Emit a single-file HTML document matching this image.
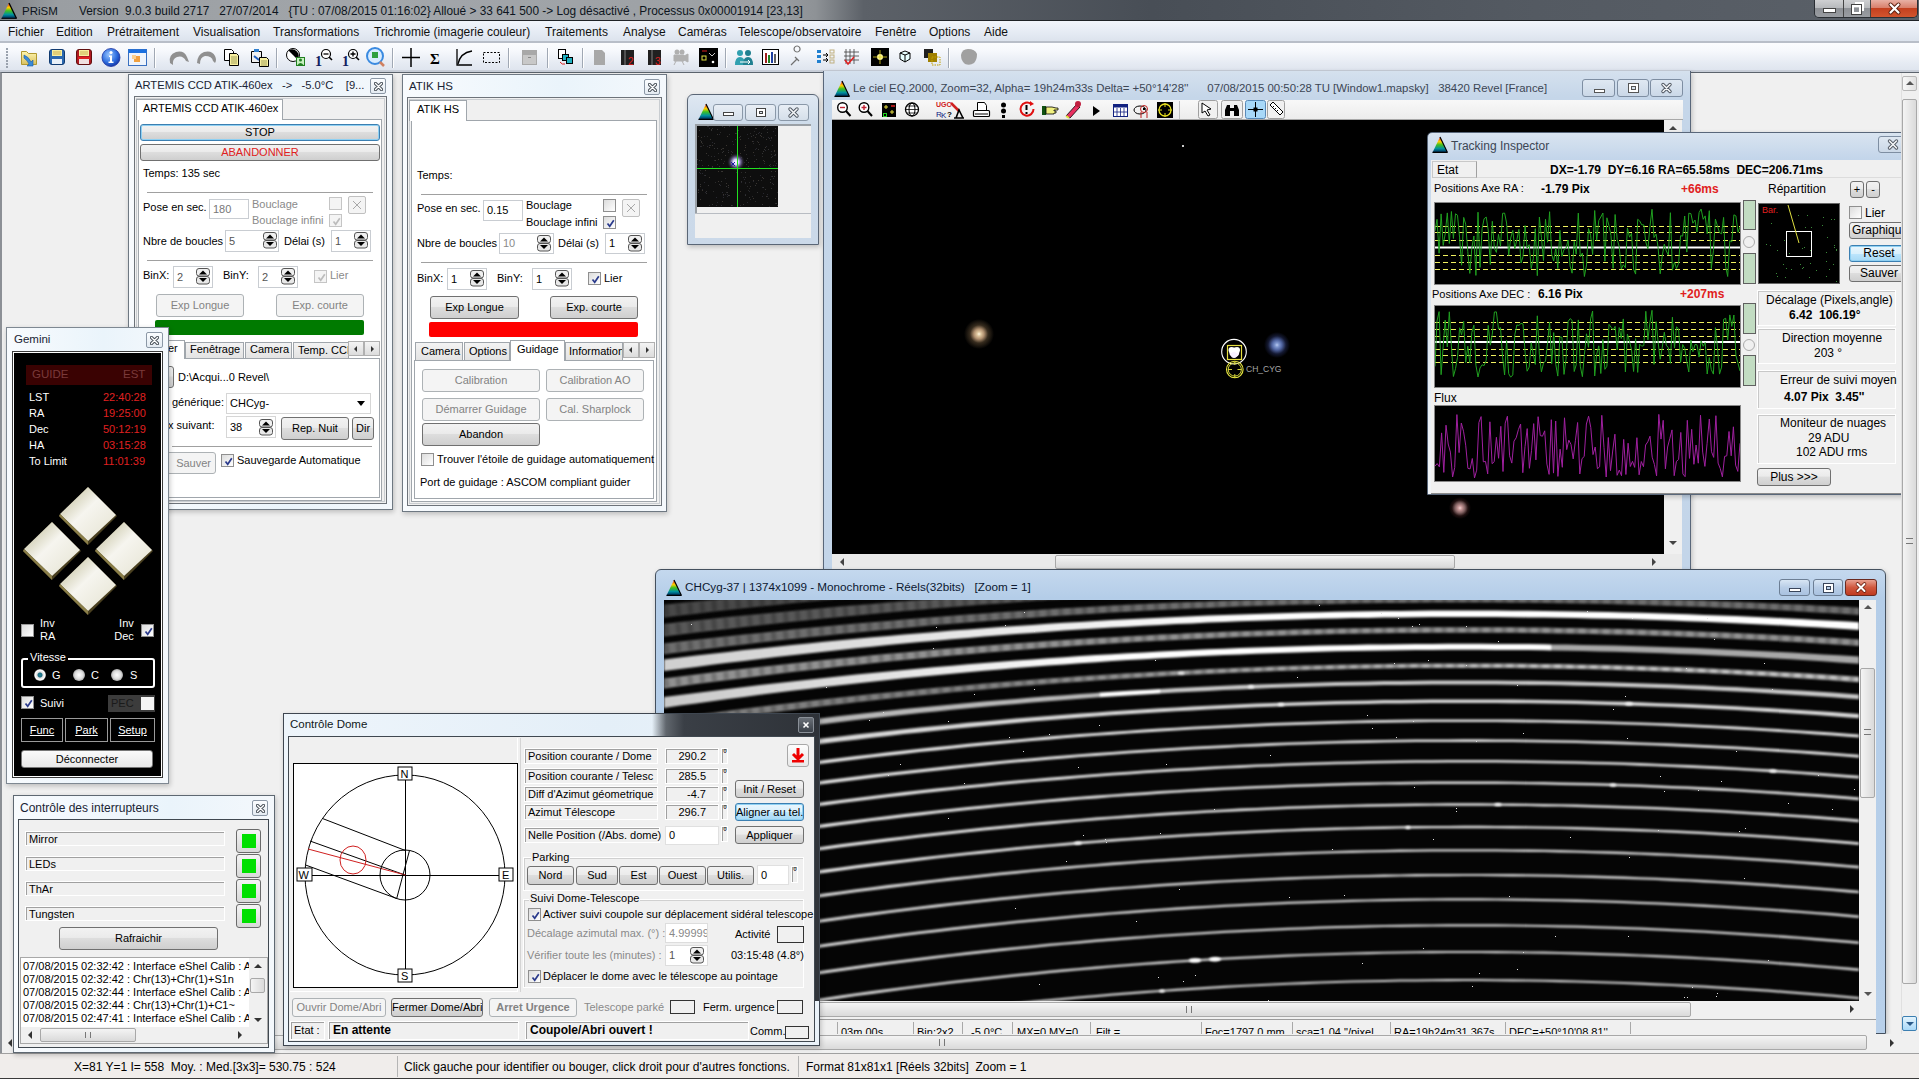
<!DOCTYPE html>
<html><head><meta charset="utf-8">
<style>
*{box-sizing:border-box;margin:0;padding:0}
html,body{width:1919px;height:1079px;overflow:hidden;background:#f0f0f0;font-family:"Liberation Sans",sans-serif;font-size:11px;color:#000}
.a{position:absolute}
.t{position:absolute;white-space:pre;line-height:1}
/* title bar */
#title{left:0;top:0;width:1919px;height:21px;background:linear-gradient(90deg,#7e8286 0,#9a9ea2 3%,#a2a6aa 20%,#9ca0a4 40%,#8e9296 42.5%,#5c6168 45%,#484e56 60%,#545a62 80%,#5a6068 100%);border-bottom:1px solid #1e2226}
#menu{left:0;top:21px;width:1919px;height:21px;background:linear-gradient(#f1f5fb,#e4eaf3 60%,#dbe2ec)}
#menu span{position:absolute;top:4px;font-size:12px;color:#111;white-space:pre}
#tbar{left:0;top:41px;width:1919px;height:31px;background:linear-gradient(#fbfcfe 0,#f6f8fc 8px,#e6ebf3 20px,#dde3ed);border-top:2px solid #b8bec8;box-shadow:inset 0 -2px 0 #c8ced8}
#tbin{left:3px;top:1px;width:1912px;height:27px;background:linear-gradient(#fbfcfe,#eef2f8 50%,#dfe5ee);border:1px solid #b6becb;border-radius:2px}
.sep{position:absolute;top:6px;width:2px;height:20px;border-left:1px solid #a8b0bc;border-right:1px solid #fff}
.ic{position:absolute;width:16px;height:16px;top:7px}
#mdi{left:0;top:72px;width:1919px;height:981px;background:#f0f0f0;border-top:1px solid #5b636c;border-left:2px solid #8c9096}
#status{left:0;top:1053px;width:1919px;height:26px;background:#f0edeb;border-top:1px solid #a0a0a0;border-bottom:1px solid #3a3a3a}
/* windows */
.win{position:absolute;border:1px solid #4e5866;border-radius:5px 5px 0 0;background:linear-gradient(#dbe7f4,#c5d7eb 30px,#c2d5ea);box-shadow:1px 2px 5px rgba(0,0,0,.22)}
.tw{position:absolute;border:1px solid #6e7882;background:linear-gradient(90deg,#f8fbfe,#eaf4fb 60%,#f4f8fc);box-shadow:1px 2px 5px rgba(0,0,0,.22)}
.wt{position:absolute;white-space:pre;font-size:12px;color:#1a2434;line-height:1}
.cbtn{position:absolute;width:15px;height:15px;border:1px solid #8c98a6;border-radius:2px;background:linear-gradient(#fbfdff,#e4ebf2)}

.wbtn{position:absolute;height:18px;border:1px solid #7c8ea3;border-radius:3px;background:linear-gradient(#e6eef8,#c9d8ea 50%,#b9cce3)}
.panel{position:absolute;background:#f0f0f0;border:1px solid #9aa3ad}
.btn{position:absolute;border:1px solid #707070;border-radius:3px;background:linear-gradient(#f2f2f2,#ebebeb 45%,#dddddd 50%,#cfcfcf);text-align:center;font-size:11px;line-height:16px;white-space:pre}
.btnd{position:absolute;border:1px solid #adb2b5;border-radius:3px;background:#f4f4f4;color:#838383;text-align:center;font-size:11px;line-height:16px;white-space:pre}
.edit{position:absolute;background:#fff;border:1px solid #c9cdd2;font-size:11px;line-height:14px;padding-left:3px;white-space:pre}
.chk{position:absolute;width:13px;height:13px;border:1px solid #8f8f8f;background:linear-gradient(135deg,#dcdcdc,#fff)}
.spin{position:absolute;width:13px;height:16px}
.spn{position:absolute;width:14px;height:17px;border:1px solid #6a6a6a;border-radius:3px;background:linear-gradient(#fafafa,#dcdcdc 50%,#fafafa 50%,#dcdcdc)}.spn:before{content:"";position:absolute;left:3px;top:2px;border-left:3px solid transparent;border-right:3px solid transparent;border-bottom:4px solid #000}.spn:after{content:"";position:absolute;left:3px;top:9px;border-left:3px solid transparent;border-right:3px solid transparent;border-top:4px solid #000}
.blk{position:absolute;background:#000}
</style></head><body>
<!-- TITLE BAR -->
<div id="title" class="a">
  <svg class="a" style="left:1px;top:2px" width="16" height="17" viewBox="0 0 16 17"><defs><linearGradient id="pg" x1="0" y1="0" x2="0" y2="1"><stop offset="0" stop-color="#e02020"/><stop offset=".3" stop-color="#ffd000"/><stop offset=".5" stop-color="#40c020"/><stop offset=".75" stop-color="#0090a0"/><stop offset="1" stop-color="#002050"/></linearGradient></defs><path d="M8 1 L15.5 16.5 L0.5 16.5Z" fill="url(#pg)"/><path d="M8 1 L15.5 16.5" stroke="#000" stroke-width="1.3"/><path d="M0.5 16.3 L15.5 16.3" stroke="#000" stroke-width="1"/></svg>
  <span class="t" style="left:22px;top:6px;font-size:11.5px;color:#0d1520">PRiSM</span>
  <span class="t" style="left:79px;top:6px;font-size:11.85px;color:#0d1520">Version  9.0.3 build 2717   27/07/2014   {TU : 07/08/2015 01:16:02} Alloué &gt; 33 641 500 -&gt; Log désactivé , Processus 0x00001914 [23,13]</span>
  <div class="a" style="left:1814px;top:0;width:104px;height:18px;border:1px solid #2a2e33;border-top:none;border-radius:0 0 5px 5px;overflow:hidden">
    <div class="a" style="left:0;top:0;width:29px;height:17px;border-right:1px solid #444;background:linear-gradient(#cfd0d2,#b8babd 45%,#8e9196 50%,#9a9da2)"></div>
    <div class="a" style="left:9px;top:9px;width:11px;height:3px;background:#fff;box-shadow:0 0 0 1px #444"></div>
    <div class="a" style="left:29px;top:0;width:27px;height:17px;border-right:1px solid #444;background:linear-gradient(#cfd0d2,#b8babd 45%,#8e9196 50%,#9a9da2)"></div>
    <div class="a" style="left:37px;top:5px;width:9px;height:9px;border:2px solid #fff;box-shadow:0 0 0 1px #444"></div>
    <div class="a" style="left:40px;top:2px;width:9px;height:9px;border-top:2px solid #fff;border-right:2px solid #fff"></div>
    <div class="a" style="left:56px;top:0;width:48px;height:17px;background:linear-gradient(#e8b0a4,#d9806c 45%,#c4401f 50%,#d2552e)"></div>
    <svg class="a" style="left:56px;top:0" width="48" height="17"><path d="M19.5 4.5l8 8M27.5 4.5l-8 8" stroke="#5a2010" stroke-width="4" stroke-linecap="round"/><path d="M19.5 4.5l8 8M27.5 4.5l-8 8" stroke="#fff" stroke-width="2.2" stroke-linecap="round"/></svg>
  </div>
</div>
<!-- MENU -->
<div id="menu" class="a">
  <span style="left:8px">Fichier</span><span style="left:56px">Edition</span><span style="left:107px">Prétraitement</span><span style="left:193px">Visualisation</span><span style="left:273px">Transformations</span><span style="left:374px">Trichromie (imagerie couleur)</span><span style="left:545px">Traitements</span><span style="left:623px">Analyse</span><span style="left:678px">Caméras</span><span style="left:738px">Telescope/observatoire</span><span style="left:875px">Fenêtre</span><span style="left:929px">Options</span><span style="left:984px">Aide</span>
</div>
<!-- TOOLBAR -->
<div id="tbar" class="a"><svg class="a" style="left:0;top:-1px" width="1000" height="30" viewBox="0 42 1000 30">
<defs>
<linearGradient id="gfold" x1="0" y1="0" x2="0" y2="1"><stop offset="0" stop-color="#fff6b0"/><stop offset="1" stop-color="#d8c060"/></linearGradient>
<radialGradient id="ginfo" cx=".4" cy=".35" r=".7"><stop offset="0" stop-color="#9cc8ff"/><stop offset=".6" stop-color="#3070e0"/><stop offset="1" stop-color="#1030a0"/></radialGradient>
</defs>
<!-- grip -->
<g fill="#9aa2ae"><rect x="6" y="48" width="2" height="2"/><rect x="6" y="51" width="2" height="2"/><rect x="6" y="54" width="2" height="2"/><rect x="6" y="57" width="2" height="2"/><rect x="6" y="60" width="2" height="2"/><rect x="6" y="63" width="2" height="2"/><rect x="6" y="66" width="2" height="2"/></g>
<!-- folder -->
<path d="M21.5 51.5 h5 l2 2 h8 v11 h-15z" fill="url(#gfold)" stroke="#b09830"/>
<path d="M24 55 q5 2 7 7 l2 -2 v6 h-6 l2 -2 q-2 -4 -5 -6z" fill="#3a8ad8" stroke="#1a5aa8" stroke-width=".6"/>
<!-- blue floppy -->
<rect x="49.5" y="49.5" width="15" height="15" rx="2.5" fill="#2a68b0" stroke="#103a70"/>
<rect x="52" y="50" width="10" height="6" fill="#f8f0a0"/><path d="M53 52h8M53 54h8" stroke="#c0a040" stroke-width=".8"/>
<rect x="52" y="59" width="10" height="5" fill="#e8f0f8"/>
<!-- red floppy -->
<rect x="76.5" y="49.5" width="15" height="15" rx="2.5" fill="#b01820" stroke="#601010"/>
<rect x="79" y="50" width="10" height="6" fill="#f8f0a0"/><path d="M80 52h8M80 54h8" stroke="#c0a040" stroke-width=".8"/>
<rect x="79" y="59" width="10" height="5" fill="#f0e0e0"/><rect x="78" y="57" width="12" height="2" fill="#e02020"/>
<!-- info -->
<circle cx="111" cy="57.5" r="9" fill="url(#ginfo)" stroke="#1830a0" stroke-width=".8"/>
<circle cx="111" cy="52.5" r="1.6" fill="#fff"/><path d="M109 55.5h3v6h1.5v1.5h-5v-1.5h1.5v-4.5h-1z" fill="#fff"/>
<!-- window -->
<rect x="128.5" y="49.5" width="18" height="16" fill="#eef4fc" stroke="#3a70c0"/>
<rect x="128.5" y="49.5" width="18" height="3.5" fill="#1a70e0"/>
<rect x="134" y="56" width="6" height="6" fill="#f0a040"/><rect x="132" y="55" width="4" height="4" fill="#f8d090"/>
<path d="M154.5 48v20" stroke="#a0a8b4"/><path d="M155.5 48v20" stroke="#fff"/>
<!-- undo/redo gray -->
<path d="M170 63 q-2 -8 6 -11 q8 -2 11 5 l2 5 l-3 -1 q-3 -6 -9 -4 q-5 2 -4 8z" fill="#909090"/>
<path d="M197 63 q0 -8 7 -11 q8 -2 11 4 q2 4 0 7 l-2 -2 q-1 -5 -8 -5 q-5 1 -5 8z" fill="#909090"/>
<!-- copy -->
<path d="M224.5 49.5h7l2 2v9h-9z" fill="#fff" stroke="#000"/><path d="M229.5 53.5h7l2 2v10h-9z" fill="#f8f0a0" stroke="#000"/><path d="M231 57h6M231 59h6M231 61h6M231 63h6" stroke="#808040" stroke-width=".7"/>
<!-- paste -->
<path d="M251.5 51.5h10v11h-10z" fill="#f0f0f0" stroke="#000"/><rect x="254" y="49" width="5" height="3" fill="#3080d0"/><path d="M254 56l5 4" stroke="#2060c0" stroke-width="2"/><path d="M259.5 57.5h7l2 2v7h-9z" fill="#f8f0a0" stroke="#000"/><path d="M261 61h6M261 63h6M261 65h6" stroke="#808040" stroke-width=".7"/>
<path d="M276.5 48v20" stroke="#a0a8b4"/><path d="M277.5 48v20" stroke="#fff"/>
<!-- black half circle -->
<circle cx="293" cy="55" r="6.5" fill="#fff" stroke="#000"/><path d="M288.5 50.5 a6.5 6.5 0 0 1 9 9z" fill="#000"/>
<rect x="296.5" y="57.5" width="8" height="8" fill="#c8f0c0" stroke="#208020"/><circle cx="300.5" cy="60" r="1.5" fill="#208020"/><path d="M297.5 65 q3 -4 6 0" fill="#208020"/>
<!-- 1 with magnifier minus -->
<text x="315" y="66" font-size="14" font-weight="bold" font-family="Liberation Serif" fill="#102060">1</text>
<circle cx="326" cy="54" r="4.5" fill="#fff" stroke="#000" stroke-width="1.2"/><path d="M323.5 54h5" stroke="#000" stroke-width="1.3"/><path d="M329 57l3 3" stroke="#000" stroke-width="1.6"/>
<text x="342" y="66" font-size="14" font-weight="bold" font-family="Liberation Serif" fill="#102060">1</text>
<circle cx="353" cy="54" r="4.5" fill="#fff" stroke="#000" stroke-width="1.2"/><path d="M350.5 54h5M353 51.5v5" stroke="#000" stroke-width="1.3"/><path d="M356 57l3 3" stroke="#000" stroke-width="1.6"/>
<!-- magnifier blue -->
<circle cx="375" cy="56" r="8" fill="#d8ecff" stroke="#3a8ae0" stroke-width="2"/><rect x="372" y="52" width="6" height="6" fill="#30a040"/><path d="M380 62l4 4" stroke="#d08060" stroke-width="2.5"/>
<path d="M392.5 48v20" stroke="#a0a8b4"/><path d="M393.5 48v20" stroke="#fff"/>
<!-- + -->
<path d="M402 57.5h18M411 48v19" stroke="#000" stroke-width="1.5"/>
<text x="430" y="64" font-size="15" font-family="Liberation Serif" font-weight="bold">Σ</text>
<path d="M457 49v16h15" fill="none" stroke="#000" stroke-width="1.3"/><path d="M458 64 q2 -11 14 -13" fill="none" stroke="#000" stroke-width="1.3"/>
<rect x="483.5" y="52.5" width="16" height="10" fill="none" stroke="#000" stroke-dasharray="2 1.5"/>
<path d="M508.5 48v20" stroke="#a0a8b4"/><path d="M509.5 48v20" stroke="#fff"/>
<!-- gray box -->
<rect x="522" y="50" width="15" height="15" fill="#a8a8a8"/><rect x="523" y="55" width="13" height="9" fill="#c8c8c8"/><rect x="528" y="57" width="3" height="1" fill="#888"/>
<path d="M547.5 48v20" stroke="#a0a8b4"/><path d="M548.5 48v20" stroke="#fff"/>
<!-- blue/red -->
<rect x="558.5" y="49.5" width="7" height="9" fill="#fff" stroke="#000"/><rect x="562.5" y="54.5" width="6" height="6" fill="#20b0c0" stroke="#000"/><rect x="566.5" y="57.5" width="6" height="6" fill="#20b0c0" stroke="#000"/><path d="M560 62 q2 3 5 2" stroke="#e02020" fill="none"/>
<path d="M582.5 48v20" stroke="#a0a8b4"/><path d="M583.5 48v20" stroke="#fff"/>
<!-- books -->
<path d="M594 50h8l3 3v12h-11z" fill="#a8a8a8"/>
<rect x="621" y="50" width="13" height="15" fill="#202020"/><rect x="624" y="50" width="2" height="15" fill="#505050"/><text x="628" y="65" font-size="10" fill="#e02020" font-family="Liberation Sans">2</text>
<rect x="648" y="50" width="13" height="15" fill="#202020"/><rect x="651" y="50" width="2" height="15" fill="#505050"/><text x="655" y="65" font-size="10" fill="#e02020" font-family="Liberation Sans">3</text>
<path d="M674 55h10v6h-10zM684 56l4 -2v8l-4 -2zM676 61l-2 4M682 61l2 4" fill="#b0b0b0" stroke="#b0b0b0"/><circle cx="677" cy="52" r="2.5" fill="#b0b0b0"/><circle cx="682" cy="52" r="2.5" fill="#b0b0b0"/>
<rect x="699" y="48" width="19" height="19" fill="#000"/><rect x="702" y="56" width="4" height="4" fill="none" stroke="#e0e040"/><path d="M702 51h5" stroke="#e02020"/><circle cx="713" cy="62" r="1.3" fill="#fff"/><path d="M709 53 l3 3 l3 -3" stroke="#fff" fill="none" stroke-width=".8"/>
<path d="M725.5 48v20" stroke="#a0a8b4"/><path d="M726.5 48v20" stroke="#fff"/>
<!-- people -->
<circle cx="740" cy="53" r="3" fill="#30a0b0"/><path d="M735 65 q0 -8 5 -8 q5 0 5 8z" fill="#30a0b0"/><circle cx="748" cy="53" r="3" fill="#208090"/><path d="M743 65 q0 -8 5 -8 q5 0 5 8z" fill="#208090"/><path d="M740 62h10l-2 -2M750 62l-2 2" stroke="#fff" fill="none"/>
<rect x="762.5" y="49.5" width="16" height="15" fill="#fff" stroke="#000"/><rect x="765" y="53" width="2" height="10" fill="#a02020"/><rect x="768" y="55" width="2" height="8" fill="#208020"/><rect x="771" y="52" width="2" height="11" fill="#2040a0"/><rect x="774" y="54" width="2" height="9" fill="#606060"/>
<path d="M791 65 l6 -6 M797 52 a3 3 0 1 1 0.1 0 M795 57 l4 4" stroke="#707070" fill="none" stroke-width="1.2"/>
<g fill="#2080d0"><rect x="817" y="50" width="4" height="3"/><rect x="817" y="55" width="4" height="3"/><rect x="817" y="60" width="4" height="3"/></g><path d="M823 55h5M826 53l2 2l-2 2M823 60h5M826 58l2 2l-2 2" stroke="#000" fill="none"/><g fill="none" stroke="#c0b080"><rect x="830" y="50" width="4" height="3"/><rect x="830" y="55" width="4" height="3"/><rect x="830" y="60" width="4" height="3"/></g>
<path d="M846 49v15M850 49v15M854 49v15M844 52h15M844 56h15M844 60h15" stroke="#404040" stroke-width=".8"/><path d="M845 60l3 4l6 -7" stroke="#e02020" stroke-width="1.5" fill="none"/>
<rect x="871" y="48" width="18" height="18" fill="#000"/><circle cx="880" cy="57" r="3" fill="#fff8a0"/><path d="M880 50v14M873 57h14" stroke="#e0d020" stroke-width=".8"/>
<path d="M900 53l5 -2l5 2v6l-5 3l-5 -3z" fill="#e8ffff" stroke="#000"/><path d="M905 55v7M900 53l5 2l5 -2" stroke="#000" fill="none"/>
<rect x="924" y="49" width="9" height="9" fill="#202020"/><rect x="928" y="53" width="9" height="9" fill="#a08000"/><rect x="932" y="57" width="8" height="8" fill="none" stroke="#c0a000" stroke-dasharray="1.5 1"/>
<path d="M948.5 48v20" stroke="#a0a8b4"/><path d="M949.5 48v20" stroke="#fff"/>
<path d="M961 55 q1 -6 7 -6 q7 0 9 5 q0 6 -3 9 q-4 3 -9 1 q-4 -3 -4 -9z" fill="#a0a0a0"/>
</svg>
</div>
<!-- MDI -->
<div id="mdi" class="a"></div>
<!-- STATUS -->
<div id="status" class="a">
  <span class="t" style="left:74px;top:7px;font-size:12px">X=81 Y=1 I= 558  Moy. : Med.[3x3]= 530.75 : 524</span>
  <div class="a" style="left:397px;top:2px;width:1px;height:21px;background:#b5b5b5"></div>
  <span class="t" style="left:404px;top:7px;font-size:12px">Click gauche pour identifier ou bouger, click droit pour d'autres fonctions.</span>
  <div class="a" style="left:798px;top:2px;width:1px;height:21px;background:#b5b5b5"></div>
  <span class="t" style="left:806px;top:7px;font-size:12px">Format 81x81x1 [Réels 32bits]  Zoom = 1</span>
</div>
<!-- ARTEMIS -->
<div class="tw" style="left:128px;top:74px;width:265px;height:436px"></div>
<span class="wt" style="left:135px;top:80px;font-size:11.2px">ARTEMIS CCD ATIK-460ex   -&gt;   -5.0°C    [9...</span>
<div class="cbtn" style="left:370px;top:78px;width:16px;height:16px"><svg class="a" style="left:3px;top:3px" width="9" height="9"><path d="M1.5 1.5l6 6M7.5 1.5l-6 6" stroke="#4a525a" stroke-width="3.2" stroke-linecap="round"/><path d="M1.5 1.5l6 6M7.5 1.5l-6 6" stroke="#fff" stroke-width="1.3" stroke-linecap="round"/></svg></div>
<div class="a" style="left:134px;top:96px;width:253px;height:408px;background:#f0f0f0;border:1px solid #6d737a"></div>
<div class="a" style="left:136px;top:98px;width:249px;height:404px;background:#f0f0f0;border:1px solid #c9cdd1"></div>
<div class="a" style="left:138px;top:119px;width:244px;height:382px;background:#fff;border:1px solid #a0a6ac"></div>
<div class="a" style="left:136px;top:99px;width:147px;height:21px;background:#fff;border:1px solid #a0a6ac;border-bottom:none"></div>
<span class="t" style="left:143px;top:103px;font-size:11px">ARTEMIS CCD ATIK-460ex</span>
<div class="btn" style="left:140px;top:124px;width:240px;height:17px;border:1px solid #3c7fb1;box-shadow:inset 0 0 0 1px #8fd0f2;line-height:15px;font-size:11px">STOP</div>
<div class="btn" style="left:140px;top:144px;width:240px;height:17px;color:#e02020;line-height:15px">ABANDONNER</div>
<span class="t" style="left:143px;top:168px">Temps: 135 sec</span>
<div class="a" style="left:147px;top:192px;width:226px;height:2px;border-top:1px solid #a0a0a0;border-bottom:1px solid #fff"></div>
<span class="t" style="left:143px;top:202px">Pose en sec.</span>
<div class="edit" style="left:209px;top:199px;width:40px;height:20px;color:#777;line-height:18px">180</div>
<span class="t" style="left:252px;top:199px;color:#8a8a8a">Bouclage</span>
<div class="chk" style="left:329px;top:197px;border-color:#c5c5c5;background:#f4f4f4"></div>
<div class="a" style="left:348px;top:196px;width:18px;height:18px;border:1px solid #c0c0c0;border-radius:2px;background:#f4f4f4;color:#aaa;font-size:13px;text-align:center;line-height:16px"><svg class="a" style="left:3px;top:3px" width="10" height="10"><path d="M1 1l8 8M9 1l-8 8" stroke="#a8a8a8" stroke-width="1"/></svg></div>
<span class="t" style="left:252px;top:215px;color:#8a8a8a">Bouclage infini</span>
<div class="chk" style="left:329px;top:214px;border-color:#c5c5c5;background:#f4f4f4;color:#bbb;font-size:11px;line-height:11px;text-align:center"><svg class="a" style="left:1px;top:1px" width="11" height="11"><path d="M2.5 5.5l2.2 2.8L8.8 2.2" fill="none" stroke="#bcbcbc" stroke-width="1.7"/></svg></div>
<span class="t" style="left:143px;top:236px">Nbre de boucles</span>
<div class="edit" style="left:225px;top:230px;width:54px;height:22px;color:#555;line-height:20px">5</div>
<span class="t" style="left:284px;top:236px">Délai (s)</span>
<div class="edit" style="left:331px;top:230px;width:40px;height:22px;color:#555;line-height:20px">1</div>
<div class="a" style="left:147px;top:260px;width:226px;height:2px;border-top:1px solid #a0a0a0;border-bottom:1px solid #fff"></div>
<span class="t" style="left:143px;top:270px">BinX:</span>
<div class="edit" style="left:173px;top:266px;width:40px;height:22px;color:#555;line-height:20px">2</div>
<span class="t" style="left:223px;top:270px">BinY:</span>
<div class="edit" style="left:258px;top:266px;width:40px;height:22px;color:#555;line-height:20px">2</div>
<div class="chk" style="left:314px;top:270px;border-color:#c5c5c5;background:#f4f4f4;color:#bbb;font-size:11px;line-height:11px;text-align:center"><svg class="a" style="left:1px;top:1px" width="11" height="11"><path d="M2.5 5.5l2.2 2.8L8.8 2.2" fill="none" stroke="#bcbcbc" stroke-width="1.7"/></svg></div>
<span class="t" style="left:330px;top:270px;color:#8a8a8a">Lier</span>
<div class="btnd" style="left:156px;top:294px;width:88px;height:23px;line-height:21px;font-size:11px">Exp Longue</div>
<div class="btnd" style="left:276px;top:294px;width:88px;height:23px;line-height:21px;font-size:11px">Exp. courte</div>
<div class="a" style="left:155px;top:320px;width:209px;height:15px;background:#007a00;border-radius:2px"></div>
<!-- tabs row 2 -->
<div class="a" style="left:168px;top:358px;width:212px;height:140px;background:#fff;border:1px solid #a0a6ac"></div>
<div class="a" style="left:165px;top:340px;width:20px;height:19px;background:#fff;border:1px solid #a0a6ac;border-bottom:none"></div>
<span class="t" style="left:168px;top:343px;font-size:11px">er</span>
<div class="a" style="left:185px;top:342px;width:59px;height:17px;background:linear-gradient(#f3f3f3,#e3e3e3);border:1px solid #a0a6ac"></div>
<span class="t" style="left:190px;top:344px;font-size:11px">Fenêtrage</span>
<div class="a" style="left:245px;top:342px;width:47px;height:17px;background:linear-gradient(#f3f3f3,#e3e3e3);border:1px solid #a0a6ac"></div>
<span class="t" style="left:250px;top:344px;font-size:11px">Camera</span>
<div class="a" style="left:293px;top:342px;width:56px;height:17px;background:linear-gradient(#f3f3f3,#e3e3e3);border:1px solid #a0a6ac;overflow:hidden"><span class="t" style="left:4px;top:2px;font-size:11px">Temp. CCD</span></div>
<div class="a" style="left:348px;top:341px;width:16px;height:15px;background:linear-gradient(#f4f4f4,#dcdcdc);border:1px solid #b0b0b0;font-size:8px;line-height:13px;text-align:center;color:#333"><div class="a" style="left:5px;top:4px;border-top:3px solid transparent;border-bottom:3px solid transparent;border-right:3px solid #333"></div></div>
<div class="a" style="left:364px;top:341px;width:16px;height:15px;background:linear-gradient(#f4f4f4,#dcdcdc);border:1px solid #b0b0b0;font-size:8px;line-height:13px;text-align:center;color:#333"><div class="a" style="left:6px;top:4px;border-top:3px solid transparent;border-bottom:3px solid transparent;border-left:3px solid #333"></div></div>
<div class="btn" style="left:160px;top:366px;width:14px;height:22px"></div>
<span class="t" style="left:178px;top:372px">D:\Acqui...0 Revel\</span>
<span class="t" style="left:172px;top:397px">générique:</span>
<div class="edit" style="left:226px;top:393px;width:145px;height:21px;line-height:19px;font-size:11px;border-color:#d6d6d6">CHCyg-</div>
<div class="a" style="left:357px;top:401px;width:0;height:0;border-left:4px solid transparent;border-right:4px solid transparent;border-top:5px solid #000"></div>
<span class="t" style="left:168px;top:420px">x suivant:</span>
<div class="edit" style="left:226px;top:416px;width:50px;height:22px;line-height:20px;font-size:11px;border-color:#d6d6d6">38</div>
<div class="btn" style="left:281px;top:417px;width:68px;height:23px;line-height:21px;font-size:11px">Rep. Nuit</div>
<div class="btn" style="left:352px;top:417px;width:22px;height:23px;line-height:21px;font-size:11px;text-align:left;padding-left:3px;overflow:hidden">Dir</div>
<div class="a" style="left:172px;top:446px;width:200px;height:2px;border-top:1px solid #a0a0a0;border-bottom:1px solid #fff"></div>
<div class="btnd" style="left:162px;top:452px;width:54px;height:22px;line-height:20px;font-size:11px;text-align:right;padding-right:4px">Sauver</div>
<div class="chk" style="left:221px;top:454px;color:#243a8a;font-size:11px;line-height:11px;text-align:center"><svg class="a" style="left:1px;top:1px" width="11" height="11"><path d="M2.5 5.5l2.2 2.8L8.8 2.2" fill="none" stroke="#2a3a8c" stroke-width="1.7"/></svg></div>
<span class="t" style="left:237px;top:455px;font-size:11px">Sauvegarde Automatique</span>

<!-- ATIK HS -->
<div class="tw" style="left:402px;top:74px;width:265px;height:438px"></div>
<span class="wt" style="left:409px;top:81px;font-size:11.5px">ATIK HS</span>
<div class="cbtn" style="left:644px;top:79px;width:16px;height:16px"><svg class="a" style="left:3px;top:3px" width="9" height="9"><path d="M1.5 1.5l6 6M7.5 1.5l-6 6" stroke="#4a525a" stroke-width="3.2" stroke-linecap="round"/><path d="M1.5 1.5l6 6M7.5 1.5l-6 6" stroke="#fff" stroke-width="1.3" stroke-linecap="round"/></svg></div>
<div class="a" style="left:407px;top:97px;width:255px;height:409px;background:#f0f0f0;border:1px solid #6d737a"></div>
<div class="a" style="left:409px;top:99px;width:251px;height:405px;background:#f0f0f0;border:1px solid #c9cdd1"></div>
<div class="a" style="left:411px;top:120px;width:246px;height:382px;background:#fff;border:1px solid #a0a6ac"></div>
<div class="a" style="left:409px;top:100px;width:58px;height:21px;background:#fff;border:1px solid #a0a6ac;border-bottom:none"></div>
<span class="t" style="left:417px;top:104px;font-size:11px">ATIK HS</span>
<span class="t" style="left:417px;top:170px">Temps:</span>
<div class="a" style="left:421px;top:194px;width:226px;height:2px;border-top:1px solid #a0a0a0;border-bottom:1px solid #fff"></div>
<span class="t" style="left:417px;top:203px">Pose en sec.</span>
<div class="edit" style="left:483px;top:200px;width:40px;height:21px;line-height:19px;font-size:11px">0.15</div>
<span class="t" style="left:526px;top:200px">Bouclage</span>
<div class="chk" style="left:603px;top:199px"></div>
<div class="a" style="left:622px;top:199px;width:18px;height:18px;border:1px solid #c0c0c0;border-radius:2px;background:#f4f4f4;color:#aaa;font-size:13px;text-align:center;line-height:16px"><svg class="a" style="left:3px;top:3px" width="10" height="10"><path d="M1 1l8 8M9 1l-8 8" stroke="#a8a8a8" stroke-width="1"/></svg></div>
<span class="t" style="left:526px;top:217px">Bouclage infini</span>
<div class="chk" style="left:603px;top:216px;color:#243a8a;font-size:11px;line-height:11px;text-align:center"><svg class="a" style="left:1px;top:1px" width="11" height="11"><path d="M2.5 5.5l2.2 2.8L8.8 2.2" fill="none" stroke="#2a3a8c" stroke-width="1.7"/></svg></div>
<span class="t" style="left:417px;top:238px">Nbre de boucles</span>
<div class="edit" style="left:499px;top:233px;width:55px;height:21px;line-height:19px;color:#8a8a8a;font-size:11px">10</div>
<span class="t" style="left:558px;top:238px">Délai (s)</span>
<div class="edit" style="left:605px;top:233px;width:40px;height:21px;line-height:19px;font-size:11px">1</div>
<div class="a" style="left:421px;top:262px;width:226px;height:2px;border-top:1px solid #a0a0a0;border-bottom:1px solid #fff"></div>
<span class="t" style="left:417px;top:273px">BinX:</span>
<div class="edit" style="left:447px;top:268px;width:40px;height:22px;line-height:20px;font-size:11px">1</div>
<span class="t" style="left:497px;top:273px">BinY:</span>
<div class="edit" style="left:532px;top:268px;width:40px;height:22px;line-height:20px;font-size:11px">1</div>
<div class="chk" style="left:588px;top:272px;color:#243a8a;font-size:11px;line-height:11px;text-align:center"><svg class="a" style="left:1px;top:1px" width="11" height="11"><path d="M2.5 5.5l2.2 2.8L8.8 2.2" fill="none" stroke="#2a3a8c" stroke-width="1.7"/></svg></div>
<span class="t" style="left:604px;top:273px;font-size:11px">Lier</span>
<div class="btn" style="left:430px;top:296px;width:89px;height:23px;line-height:21px;font-size:11px">Exp Longue</div>
<div class="btn" style="left:550px;top:296px;width:88px;height:23px;line-height:21px;font-size:11px">Exp. courte</div>
<div class="a" style="left:429px;top:322px;width:209px;height:15px;background:#f00;border-radius:2px"></div>
<div class="a" style="left:414px;top:360px;width:240px;height:139px;background:#fff;border:1px solid #a0a6ac"></div>
<div class="a" style="left:415px;top:342px;width:48px;height:19px;background:linear-gradient(#f3f3f3,#e3e3e3);border:1px solid #a0a6ac"></div>
<span class="t" style="left:421px;top:346px;font-size:11px">Camera</span>
<div class="a" style="left:464px;top:342px;width:46px;height:19px;background:linear-gradient(#f3f3f3,#e3e3e3);border:1px solid #a0a6ac"></div>
<span class="t" style="left:469px;top:346px;font-size:11px">Options</span>
<div class="a" style="left:510px;top:340px;width:55px;height:21px;background:#fff;border:1px solid #a0a6ac;border-bottom:none"></div>
<span class="t" style="left:517px;top:344px;font-size:11px">Guidage</span>
<div class="a" style="left:565px;top:342px;width:58px;height:19px;background:linear-gradient(#f3f3f3,#e3e3e3);border:1px solid #a0a6ac;overflow:hidden"><span class="t" style="left:3px;top:3px;font-size:11px">Information</span></div>
<div class="a" style="left:623px;top:342px;width:16px;height:16px;background:linear-gradient(#f4f4f4,#dcdcdc);border:1px solid #b0b0b0;font-size:8px;line-height:14px;text-align:center;color:#333"><div class="a" style="left:5px;top:4px;border-top:3px solid transparent;border-bottom:3px solid transparent;border-right:3px solid #333"></div></div>
<div class="a" style="left:639px;top:342px;width:16px;height:16px;background:linear-gradient(#f4f4f4,#dcdcdc);border:1px solid #b0b0b0;font-size:8px;line-height:14px;text-align:center;color:#333"><div class="a" style="left:6px;top:4px;border-top:3px solid transparent;border-bottom:3px solid transparent;border-left:3px solid #333"></div></div>
<div class="btnd" style="left:422px;top:369px;width:118px;height:23px;line-height:21px;font-size:11px">Calibration</div>
<div class="btnd" style="left:546px;top:369px;width:98px;height:23px;line-height:21px;font-size:11px">Calibration AO</div>
<div class="btnd" style="left:422px;top:398px;width:118px;height:23px;line-height:21px;font-size:11px">Démarrer Guidage</div>
<div class="btnd" style="left:546px;top:398px;width:98px;height:23px;line-height:21px;font-size:11px">Cal. Sharplock</div>
<div class="btn" style="left:422px;top:423px;width:118px;height:23px;line-height:21px;font-size:11px">Abandon</div>
<div class="chk" style="left:421px;top:453px"></div>
<span class="t" style="left:437px;top:454px;font-size:11px">Trouver l'étoile de guidage automatiquement</span>
<span class="t" style="left:420px;top:477px;font-size:11px">Port de guidage : ASCOM compliant guider</span>

<svg class="a" style="left:263px;top:232px" width="14" height="17"><rect x="0.5" y="0.5" width="13" height="7.5" rx="2.5" fill="#f0f0f0" stroke="#555"/><rect x="0.5" y="8.5" width="13" height="7.5" rx="2.5" fill="#e8e8e8" stroke="#555"/><path d="M3 6.5h8L7 2.5z M3 10h8L7 14z" fill="#000"/></svg><svg class="a" style="left:354px;top:232px" width="14" height="17"><rect x="0.5" y="0.5" width="13" height="7.5" rx="2.5" fill="#f0f0f0" stroke="#555"/><rect x="0.5" y="8.5" width="13" height="7.5" rx="2.5" fill="#e8e8e8" stroke="#555"/><path d="M3 6.5h8L7 2.5z M3 10h8L7 14z" fill="#000"/></svg><svg class="a" style="left:196px;top:268px" width="14" height="17"><rect x="0.5" y="0.5" width="13" height="7.5" rx="2.5" fill="#f0f0f0" stroke="#555"/><rect x="0.5" y="8.5" width="13" height="7.5" rx="2.5" fill="#e8e8e8" stroke="#555"/><path d="M3 6.5h8L7 2.5z M3 10h8L7 14z" fill="#000"/></svg><svg class="a" style="left:281px;top:268px" width="14" height="17"><rect x="0.5" y="0.5" width="13" height="7.5" rx="2.5" fill="#f0f0f0" stroke="#555"/><rect x="0.5" y="8.5" width="13" height="7.5" rx="2.5" fill="#e8e8e8" stroke="#555"/><path d="M3 6.5h8L7 2.5z M3 10h8L7 14z" fill="#000"/></svg><svg class="a" style="left:537px;top:235px" width="14" height="17"><rect x="0.5" y="0.5" width="13" height="7.5" rx="2.5" fill="#f0f0f0" stroke="#555"/><rect x="0.5" y="8.5" width="13" height="7.5" rx="2.5" fill="#e8e8e8" stroke="#555"/><path d="M3 6.5h8L7 2.5z M3 10h8L7 14z" fill="#000"/></svg><svg class="a" style="left:628px;top:235px" width="14" height="17"><rect x="0.5" y="0.5" width="13" height="7.5" rx="2.5" fill="#f0f0f0" stroke="#555"/><rect x="0.5" y="8.5" width="13" height="7.5" rx="2.5" fill="#e8e8e8" stroke="#555"/><path d="M3 6.5h8L7 2.5z M3 10h8L7 14z" fill="#000"/></svg><svg class="a" style="left:470px;top:270px" width="14" height="17"><rect x="0.5" y="0.5" width="13" height="7.5" rx="2.5" fill="#f0f0f0" stroke="#555"/><rect x="0.5" y="8.5" width="13" height="7.5" rx="2.5" fill="#e8e8e8" stroke="#555"/><path d="M3 6.5h8L7 2.5z M3 10h8L7 14z" fill="#000"/></svg><svg class="a" style="left:555px;top:270px" width="14" height="17"><rect x="0.5" y="0.5" width="13" height="7.5" rx="2.5" fill="#f0f0f0" stroke="#555"/><rect x="0.5" y="8.5" width="13" height="7.5" rx="2.5" fill="#e8e8e8" stroke="#555"/><path d="M3 6.5h8L7 2.5z M3 10h8L7 14z" fill="#000"/></svg>
<svg class="a" style="left:259px;top:419px" width="14" height="17"><rect x="0.5" y="0.5" width="13" height="7.5" rx="2.5" fill="#f0f0f0" stroke="#555"/><rect x="0.5" y="8.5" width="13" height="7.5" rx="2.5" fill="#e8e8e8" stroke="#555"/><path d="M3 6.5h8L7 2.5z M3 10h8L7 14z" fill="#000"/></svg>
<!-- preview -->
<div class="win" style="left:687px;top:94px;width:132px;height:151px;border-radius:6px 6px 0 0;border-color:#5a6676;background:linear-gradient(#dfe8f2,#cddbea 30px,#cbd9e9)"></div>
<svg class="a" style="left:698px;top:103px" width="16" height="17" viewBox="0 0 16 17"><path d="M8 1 L15.5 16.5 L0.5 16.5Z" fill="url(#pg)"/><path d="M8 1 L15.5 16.5 M0.5 16.3 L15.5 16.3" stroke="#000" stroke-width="1.2"/></svg>
<div class="wbtn" style="left:713px;top:104px;width:30px;height:17px;border-color:#8a98a8;background:linear-gradient(#e8eef5,#d5dfea)"><div class="a" style="left:9px;top:7px;width:11px;height:4px;border:1px solid #444;background:#fff"></div></div>
<div class="wbtn" style="left:745px;top:104px;width:31px;height:17px;border-color:#8a98a8;background:linear-gradient(#e8eef5,#d5dfea)"><div class="a" style="left:10px;top:3px;width:10px;height:9px;border:1px solid #444;box-shadow:inset 0 0 0 2px #fff,inset 0 0 0 3px #444"></div></div>
<div class="wbtn" style="left:778px;top:104px;width:31px;height:17px;border-color:#8a98a8;background:linear-gradient(#e8eef5,#d5dfea);text-align:center;font-size:13px;line-height:15px;color:#555;font-weight:bold"><svg class="a" style="left:0;top:0" width="29" height="15"><path d="M11.0 4.0L18.0 11.0M18.0 4.0L11.0 11.0" stroke="#4e5660" stroke-width="3.4" stroke-linecap="round"/><path d="M11.0 4.0L18.0 11.0M18.0 4.0L11.0 11.0" stroke="#f4f6f8" stroke-width="1.6" stroke-linecap="round"/></svg></div>
<div class="a" style="left:695px;top:124px;width:116px;height:89px;background:#f0f0f0;border-top:2px solid #9aa0a6;border-left:2px solid #9aa0a6"></div>
<svg class="a" style="left:697px;top:126px;background:#0e0e0e" width="81" height="81"><defs><radialGradient id="pst"><stop offset="0" stop-color="#fff"/><stop offset=".3" stop-color="#d8d0ff"/><stop offset=".6" stop-color="#6a6090" stop-opacity=".8"/><stop offset="1" stop-color="#202020" stop-opacity="0"/></radialGradient></defs><rect x="50" y="60" width="1" height="1" fill="#2a2a2a"/><rect x="68" y="63" width="1" height="1" fill="#333"/><rect x="53" y="73" width="1" height="1" fill="#2a2a2a"/><rect x="30" y="70" width="1" height="1" fill="#282830"/><rect x="44" y="46" width="1" height="1" fill="#2a2a2a"/><rect x="59" y="33" width="1" height="1" fill="#333"/><rect x="74" y="62" width="1" height="1" fill="#333"/><rect x="62" y="6" width="1" height="1" fill="#282830"/><rect x="10" y="0" width="1" height="1" fill="#2a2a2a"/><rect x="17" y="17" width="1" height="1" fill="#333"/><rect x="71" y="23" width="1" height="1" fill="#333"/><rect x="44" y="55" width="1" height="1" fill="#333"/><rect x="15" y="78" width="1" height="1" fill="#333"/><rect x="78" y="72" width="1" height="1" fill="#3a3530"/><rect x="2" y="34" width="1" height="1" fill="#333"/><rect x="21" y="27" width="1" height="1" fill="#2a2a2a"/><rect x="48" y="57" width="1" height="1" fill="#2a2a2a"/><rect x="25" y="66" width="1" height="1" fill="#282830"/><rect x="56" y="15" width="1" height="1" fill="#282830"/><rect x="57" y="5" width="1" height="1" fill="#2a2a2a"/><rect x="77" y="29" width="1" height="1" fill="#282830"/><rect x="1" y="64" width="1" height="1" fill="#3a3530"/><rect x="30" y="68" width="1" height="1" fill="#282830"/><rect x="4" y="15" width="1" height="1" fill="#333"/><rect x="10" y="20" width="1" height="1" fill="#282830"/><rect x="28" y="29" width="1" height="1" fill="#3a3530"/><rect x="63" y="9" width="1" height="1" fill="#3a3530"/><rect x="70" y="3" width="1" height="1" fill="#2a2a2a"/><rect x="17" y="42" width="1" height="1" fill="#3a3530"/><rect x="74" y="28" width="1" height="1" fill="#2a2a2a"/><rect x="25" y="26" width="1" height="1" fill="#333"/><rect x="65" y="51" width="1" height="1" fill="#3a3530"/><rect x="81" y="13" width="1" height="1" fill="#2a2a2a"/><rect x="7" y="49" width="1" height="1" fill="#282830"/><rect x="3" y="60" width="1" height="1" fill="#3a3530"/><rect x="67" y="37" width="1" height="1" fill="#282830"/><rect x="12" y="79" width="1" height="1" fill="#2a2a2a"/><rect x="65" y="27" width="1" height="1" fill="#333"/><rect x="11" y="59" width="1" height="1" fill="#333"/><rect x="51" y="64" width="1" height="1" fill="#2a2a2a"/><rect x="14" y="30" width="1" height="1" fill="#2a2a2a"/><rect x="68" y="24" width="1" height="1" fill="#282830"/><rect x="75" y="50" width="1" height="1" fill="#333"/><rect x="79" y="37" width="1" height="1" fill="#282830"/><rect x="56" y="26" width="1" height="1" fill="#3a3530"/><rect x="24" y="33" width="1" height="1" fill="#333"/><rect x="9" y="67" width="1" height="1" fill="#333"/><rect x="51" y="40" width="1" height="1" fill="#3a3530"/><rect x="15" y="40" width="1" height="1" fill="#3a3530"/><rect x="5" y="64" width="1" height="1" fill="#3a3530"/><rect x="56" y="54" width="1" height="1" fill="#3a3530"/><rect x="29" y="57" width="1" height="1" fill="#3a3530"/><rect x="68" y="21" width="1" height="1" fill="#3a3530"/><rect x="78" y="28" width="1" height="1" fill="#333"/><rect x="47" y="1" width="1" height="1" fill="#3a3530"/><rect x="26" y="22" width="1" height="1" fill="#3a3530"/><rect x="66" y="52" width="1" height="1" fill="#3a3530"/><rect x="28" y="52" width="1" height="1" fill="#282830"/><rect x="28" y="68" width="1" height="1" fill="#282830"/><rect x="79" y="77" width="1" height="1" fill="#333"/><rect x="43" y="13" width="1" height="1" fill="#3a3530"/><rect x="76" y="39" width="1" height="1" fill="#2a2a2a"/><rect x="58" y="59" width="1" height="1" fill="#333"/><rect x="50" y="76" width="1" height="1" fill="#282830"/><rect x="25" y="45" width="1" height="1" fill="#3a3530"/><rect x="58" y="2" width="1" height="1" fill="#333"/><rect x="48" y="51" width="1" height="1" fill="#333"/><rect x="18" y="56" width="1" height="1" fill="#2a2a2a"/><rect x="80" y="79" width="1" height="1" fill="#333"/><rect x="4" y="11" width="1" height="1" fill="#3a3530"/><rect x="78" y="39" width="1" height="1" fill="#2a2a2a"/><rect x="34" y="28" width="1" height="1" fill="#2a2a2a"/><rect x="48" y="19" width="1" height="1" fill="#3a3530"/><rect x="0" y="33" width="1" height="1" fill="#3a3530"/><rect x="69" y="70" width="1" height="1" fill="#3a3530"/><rect x="78" y="45" width="1" height="1" fill="#3a3530"/><rect x="8" y="44" width="1" height="1" fill="#3a3530"/><rect x="77" y="24" width="1" height="1" fill="#3a3530"/><rect x="66" y="34" width="1" height="1" fill="#3a3530"/><rect x="38" y="13" width="1" height="1" fill="#282830"/><rect x="46" y="78" width="1" height="1" fill="#333"/><rect x="49" y="28" width="1" height="1" fill="#2a2a2a"/><rect x="31" y="26" width="1" height="1" fill="#333"/><rect x="26" y="71" width="1" height="1" fill="#282830"/><rect x="35" y="79" width="1" height="1" fill="#282830"/><rect x="24" y="79" width="1" height="1" fill="#282830"/><rect x="31" y="69" width="1" height="1" fill="#333"/><rect x="48" y="21" width="1" height="1" fill="#3a3530"/><rect x="40" y="34" width="1" height="1" fill="#3a3530"/><rect x="77" y="25" width="1" height="1" fill="#3a3530"/><rect x="12" y="2" width="1" height="1" fill="#282830"/><rect x="20" y="3" width="1" height="1" fill="#333"/><rect x="67" y="1" width="1" height="1" fill="#3a3530"/><rect x="20" y="38" width="1" height="1" fill="#2a2a2a"/><rect x="20" y="22" width="1" height="1" fill="#333"/><rect x="58" y="23" width="1" height="1" fill="#282830"/><rect x="49" y="38" width="1" height="1" fill="#2a2a2a"/><rect x="1" y="10" width="1" height="1" fill="#3a3530"/><rect x="43" y="27" width="1" height="1" fill="#3a3530"/><rect x="59" y="2" width="1" height="1" fill="#3a3530"/><rect x="29" y="60" width="1" height="1" fill="#333"/><rect x="3" y="20" width="1" height="1" fill="#282830"/><rect x="56" y="9" width="1" height="1" fill="#333"/><rect x="1" y="63" width="1" height="1" fill="#282830"/><rect x="48" y="56" width="1" height="1" fill="#282830"/><rect x="70" y="68" width="1" height="1" fill="#282830"/><rect x="32" y="69" width="1" height="1" fill="#333"/><rect x="73" y="38" width="1" height="1" fill="#2a2a2a"/><rect x="25" y="0" width="1" height="1" fill="#282830"/><rect x="47" y="53" width="1" height="1" fill="#282830"/><rect x="74" y="12" width="1" height="1" fill="#282830"/><rect x="56" y="72" width="1" height="1" fill="#3a3530"/><rect x="44" y="34" width="1" height="1" fill="#2a2a2a"/><rect x="6" y="19" width="1" height="1" fill="#2a2a2a"/><rect x="64" y="54" width="1" height="1" fill="#2a2a2a"/><rect x="27" y="35" width="1" height="1" fill="#2a2a2a"/><rect x="81" y="57" width="1" height="1" fill="#2a2a2a"/><rect x="10" y="10" width="1" height="1" fill="#2a2a2a"/><rect x="58" y="11" width="1" height="1" fill="#3a3530"/><rect x="57" y="35" width="1" height="1" fill="#333"/><rect x="49" y="34" width="1" height="1" fill="#333"/><rect x="5" y="17" width="1" height="1" fill="#2a2a2a"/><rect x="53" y="60" width="1" height="1" fill="#3a3530"/><rect x="5" y="47" width="1" height="1" fill="#282830"/><rect x="71" y="11" width="1" height="1" fill="#282830"/><rect x="7" y="56" width="1" height="1" fill="#282830"/><rect x="40" y="76" width="1" height="1" fill="#3a3530"/><rect x="74" y="11" width="1" height="1" fill="#3a3530"/><rect x="12" y="51" width="1" height="1" fill="#3a3530"/><rect x="74" y="45" width="1" height="1" fill="#333"/><rect x="21" y="45" width="1" height="1" fill="#3a3530"/><rect x="67" y="23" width="1" height="1" fill="#333"/><rect x="65" y="70" width="1" height="1" fill="#282830"/><rect x="60" y="15" width="1" height="1" fill="#2a2a2a"/><rect x="53" y="7" width="1" height="1" fill="#2a2a2a"/><rect x="7" y="10" width="1" height="1" fill="#282830"/><rect x="19" y="71" width="1" height="1" fill="#282830"/><rect x="78" y="9" width="1" height="1" fill="#2a2a2a"/><rect x="44" y="31" width="1" height="1" fill="#333"/><rect x="77" y="35" width="1" height="1" fill="#333"/><rect x="61" y="7" width="1" height="1" fill="#282830"/><rect x="66" y="11" width="1" height="1" fill="#282830"/><rect x="29" y="19" width="1" height="1" fill="#3a3530"/><rect x="75" y="57" width="1" height="1" fill="#282830"/><rect x="31" y="59" width="1" height="1" fill="#3a3530"/><rect x="52" y="65" width="1" height="1" fill="#282830"/><rect x="78" y="29" width="1" height="1" fill="#2a2a2a"/><rect x="48" y="46" width="1" height="1" fill="#333"/><rect x="32" y="8" width="1" height="1" fill="#2a2a2a"/><rect x="15" y="16" width="1" height="1" fill="#282830"/><rect x="72" y="39" width="1" height="1" fill="#3a3530"/><rect x="0" y="38" width="1" height="1" fill="#282830"/><rect x="26" y="37" width="1" height="1" fill="#333"/><rect x="13" y="13" width="1" height="1" fill="#3a3530"/><rect x="70" y="70" width="1" height="1" fill="#282830"/><rect x="12" y="21" width="1" height="1" fill="#3a3530"/><rect x="66" y="61" width="1" height="1" fill="#333"/><rect x="3" y="73" width="1" height="1" fill="#3a3530"/><rect x="75" y="30" width="1" height="1" fill="#2a2a2a"/><rect x="56" y="55" width="1" height="1" fill="#282830"/><rect x="69" y="13" width="1" height="1" fill="#3a3530"/><rect x="24" y="55" width="1" height="1" fill="#333"/><rect x="3" y="58" width="1" height="1" fill="#333"/><rect x="53" y="50" width="1" height="1" fill="#3a3530"/><rect x="55" y="15" width="1" height="1" fill="#3a3530"/><rect x="23" y="59" width="1" height="1" fill="#282830"/><rect x="13" y="19" width="1" height="1" fill="#333"/><rect x="76" y="52" width="1" height="1" fill="#282830"/><rect x="59" y="22" width="1" height="1" fill="#282830"/><rect x="5" y="63" width="1" height="1" fill="#282830"/><rect x="14" y="3" width="1" height="1" fill="#3a3530"/><rect x="76" y="58" width="1" height="1" fill="#333"/><rect x="73" y="40" width="1" height="1" fill="#282830"/><rect x="4" y="20" width="1" height="1" fill="#2a2a2a"/><rect x="40" y="63" width="1" height="1" fill="#2a2a2a"/><rect x="21" y="33" width="1" height="1" fill="#3a3530"/><rect x="52" y="71" width="1" height="1" fill="#333"/><rect x="15" y="41" width="1" height="1" fill="#282830"/><rect x="15" y="19" width="1" height="1" fill="#3a3530"/><rect x="64" y="7" width="1" height="1" fill="#333"/><rect x="48" y="69" width="1" height="1" fill="#333"/><rect x="51" y="36" width="1" height="1" fill="#3a3530"/><rect x="39" y="46" width="1" height="1" fill="#282830"/><rect x="42" y="11" width="1" height="1" fill="#2a2a2a"/><rect x="74" y="25" width="1" height="1" fill="#282830"/><rect x="72" y="81" width="1" height="1" fill="#2a2a2a"/><rect x="11" y="39" width="1" height="1" fill="#3a3530"/><rect x="66" y="25" width="1" height="1" fill="#333"/><rect x="43" y="38" width="1" height="1" fill="#2a2a2a"/><rect x="65" y="78" width="1" height="1" fill="#333"/><rect x="22" y="40" width="1" height="1" fill="#333"/><rect x="4" y="16" width="1" height="1" fill="#3a3530"/><rect x="71" y="72" width="1" height="1" fill="#2a2a2a"/><rect x="34" y="25" width="1" height="1" fill="#2a2a2a"/><rect x="73" y="53" width="1" height="1" fill="#333"/><rect x="47" y="36" width="1" height="1" fill="#2a2a2a"/><rect x="59" y="57" width="1" height="1" fill="#3a3530"/><rect x="9" y="65" width="1" height="1" fill="#333"/><rect x="26" y="25" width="1" height="1" fill="#333"/><rect x="21" y="55" width="1" height="1" fill="#3a3530"/><rect x="3" y="44" width="1" height="1" fill="#2a2a2a"/><rect x="2" y="4" width="1" height="1" fill="#333"/><rect x="67" y="35" width="1" height="1" fill="#3a3530"/><rect x="77" y="50" width="1" height="1" fill="#333"/><rect x="43" y="10" width="1" height="1" fill="#333"/><rect x="27" y="1" width="1" height="1" fill="#333"/><rect x="59" y="8" width="1" height="1" fill="#333"/><rect x="51" y="12" width="1" height="1" fill="#282830"/><rect x="64" y="10" width="1" height="1" fill="#3a3530"/><rect x="36" y="18" width="1" height="1" fill="#282830"/><rect x="14" y="4" width="1" height="1" fill="#333"/><rect x="43" y="79" width="1" height="1" fill="#2a2a2a"/><rect x="8" y="66" width="1" height="1" fill="#282830"/><rect x="56" y="17" width="1" height="1" fill="#2a2a2a"/><rect x="3" y="47" width="1" height="1" fill="#282830"/><rect x="57" y="29" width="1" height="1" fill="#282830"/><rect x="17" y="22" width="1" height="1" fill="#333"/><rect x="25" y="42" width="1" height="1" fill="#333"/><rect x="30" y="66" width="1" height="1" fill="#2a2a2a"/><rect x="50" y="32" width="1" height="1" fill="#333"/><rect x="12" y="19" width="1" height="1" fill="#282830"/><rect x="3" y="14" width="1" height="1" fill="#2a2a2a"/><rect x="61" y="23" width="1" height="1" fill="#333"/><rect x="65" y="61" width="1" height="1" fill="#282830"/><rect x="55" y="70" width="1" height="1" fill="#2a2a2a"/><rect x="65" y="30" width="1" height="1" fill="#2a2a2a"/><rect x="8" y="49" width="1" height="1" fill="#333"/><rect x="66" y="2" width="1" height="1" fill="#2a2a2a"/><rect x="49" y="42" width="1" height="1" fill="#282830"/><rect x="44" y="56" width="1" height="1" fill="#282830"/><rect x="80" y="66" width="1" height="1" fill="#2a2a2a"/><rect x="43" y="65" width="1" height="1" fill="#3a3530"/><rect x="78" y="2" width="1" height="1" fill="#333"/><rect x="23" y="6" width="1" height="1" fill="#2a2a2a"/><rect x="63" y="49" width="1" height="1" fill="#282830"/><rect x="25" y="75" width="1" height="1" fill="#3a3530"/><rect x="75" y="19" width="1" height="1" fill="#2a2a2a"/><rect x="61" y="54" width="1" height="1" fill="#3a3530"/><rect x="73" y="56" width="1" height="1" fill="#333"/><rect x="39" y="7" width="1" height="1" fill="#2a2a2a"/><rect x="19" y="79" width="1" height="1" fill="#282830"/><rect x="32" y="0" width="1" height="1" fill="#282830"/><rect x="31" y="61" width="1" height="1" fill="#333"/><rect x="74" y="50" width="1" height="1" fill="#282830"/><rect x="26" y="68" width="1" height="1" fill="#3a3530"/><rect x="20" y="8" width="1" height="1" fill="#3a3530"/><rect x="25" y="22" width="1" height="1" fill="#2a2a2a"/><rect x="73" y="14" width="1" height="1" fill="#282830"/><rect x="62" y="18" width="1" height="1" fill="#2a2a2a"/><rect x="46" y="51" width="1" height="1" fill="#282830"/><rect x="34" y="34" width="1" height="1" fill="#333"/><rect x="24" y="23" width="1" height="1" fill="#3a3530"/><rect x="15" y="2" width="1" height="1" fill="#2a2a2a"/><rect x="24" y="45" width="1" height="1" fill="#333"/><rect x="35" y="26" width="1" height="1" fill="#2a2a2a"/><rect x="52" y="56" width="1" height="1" fill="#2a2a2a"/><rect x="5" y="39" width="1" height="1" fill="#2a2a2a"/><rect x="26" y="69" width="1" height="1" fill="#282830"/><rect x="75" y="19" width="1" height="1" fill="#282830"/><rect x="68" y="0" width="1" height="1" fill="#333"/><rect x="9" y="27" width="1" height="1" fill="#3a3530"/><rect x="50" y="8" width="1" height="1" fill="#282830"/><rect x="60" y="66" width="1" height="1" fill="#333"/><rect x="58" y="75" width="1" height="1" fill="#2a2a2a"/><rect x="30" y="66" width="1" height="1" fill="#333"/><rect x="17" y="30" width="1" height="1" fill="#282830"/><rect x="72" y="80" width="1" height="1" fill="#2a2a2a"/><rect x="20" y="76" width="1" height="1" fill="#282830"/><rect x="30" y="10" width="1" height="1" fill="#3a3530"/><rect x="11" y="0" width="1" height="1" fill="#282830"/><rect x="78" y="77" width="1" height="1" fill="#2a2a2a"/><rect x="40" y="76" width="1" height="1" fill="#3a3530"/><rect x="1" y="66" width="1" height="1" fill="#3a3530"/><rect x="61" y="16" width="1" height="1" fill="#3a3530"/><rect x="31" y="24" width="1" height="1" fill="#282830"/><rect x="52" y="62" width="1" height="1" fill="#2a2a2a"/><rect x="47" y="24" width="1" height="1" fill="#3a3530"/><rect x="76" y="5" width="1" height="1" fill="#282830"/><rect x="4" y="34" width="1" height="1" fill="#333"/><rect x="22" y="58" width="1" height="1" fill="#333"/><rect x="22" y="8" width="1" height="1" fill="#282830"/><rect x="35" y="15" width="1" height="1" fill="#282830"/><rect x="69" y="20" width="1" height="1" fill="#282830"/><rect x="29" y="66" width="1" height="1" fill="#2a2a2a"/><rect x="66" y="11" width="1" height="1" fill="#2a2a2a"/><rect x="2" y="46" width="1" height="1" fill="#282830"/><rect x="70" y="6" width="1" height="1" fill="#333"/><rect x="16" y="65" width="1" height="1" fill="#2a2a2a"/><rect x="38" y="7" width="1" height="1" fill="#3a3530"/><rect x="48" y="68" width="1" height="1" fill="#282830"/><rect x="41" y="4" width="1" height="1" fill="#282830"/><rect x="62" y="41" width="1" height="1" fill="#2a2a2a"/><rect x="17" y="34" width="1" height="1" fill="#282830"/><rect x="66" y="67" width="1" height="1" fill="#282830"/><rect x="74" y="31" width="1" height="1" fill="#333"/><rect x="72" y="12" width="1" height="1" fill="#333"/><rect x="34" y="79" width="1" height="1" fill="#3a3530"/><rect x="18" y="34" width="1" height="1" fill="#3a3530"/><rect x="11" y="29" width="1" height="1" fill="#2a2a2a"/><rect x="54" y="10" width="1" height="1" fill="#333"/><circle cx="39" cy="36" r="9" fill="url(#pst)"/><path d="M34 40l4 -4M34 36l4 4" stroke="#2020a0" stroke-width="1"/></svg>
<div class="a" style="left:737px;top:126px;width:1px;height:81px;background:#20e020"></div>
<div class="a" style="left:697px;top:168px;width:81px;height:1px;background:#20e020"></div>
<div class="a" style="left:695px;top:213px;width:116px;height:25px;background:#f0f0f0;border-top:1px solid #b8bcc2"></div>

<!-- SKY -->
<div class="win" style="left:823px;top:71px;width:868px;height:513px;border-top:none;border-radius:0;border-color:#59677a;background:linear-gradient(#d5e1ee,#c5d6e9 26px,#c3d5e9)"></div>
<svg class="a" style="left:834px;top:80px" width="16" height="17" viewBox="0 0 16 17"><path d="M8 1 L15.5 16.5 L0.5 16.5Z" fill="url(#pg)"/><path d="M8 1 L15.5 16.5 M0.5 16.3 L15.5 16.3" stroke="#000" stroke-width="1.2"/></svg>
<span class="wt" style="left:853px;top:83px;color:#3c4654;font-size:11.4px">Le ciel EQ.2000, Zoom=32, Alpha= 19h24m33s Delta= +50°14'28''      07/08/2015 00:50:28 TU [Window1.mapsky]   38420 Revel [France]</span>
<div class="wbtn" style="left:1582px;top:79px;width:33px;height:18px;border-color:#7e8ea2;background:linear-gradient(#dfe8f2,#cbd8e7)"><div class="a" style="left:11px;top:9px;width:11px;height:4px;border:1px solid #555;background:#fff"></div></div>
<div class="wbtn" style="left:1617px;top:79px;width:32px;height:18px;border-color:#7e8ea2;background:linear-gradient(#dfe8f2,#cbd8e7)"><div class="a" style="left:10px;top:3px;width:11px;height:10px;border:1px solid #555;box-shadow:inset 0 0 0 2px #fff,inset 0 0 0 3px #555"></div></div>
<div class="wbtn" style="left:1650px;top:79px;width:33px;height:18px;border-color:#7e8ea2;background:linear-gradient(#dfe8f2,#cbd8e7);text-align:center;font-size:13px;line-height:16px;color:#555;font-weight:bold"><svg class="a" style="left:0;top:0" width="31" height="16"><path d="M12.0 4.5L19.0 11.5M19.0 4.5L12.0 11.5" stroke="#4e5660" stroke-width="3.4" stroke-linecap="round"/><path d="M12.0 4.5L19.0 11.5M19.0 4.5L12.0 11.5" stroke="#f4f6f8" stroke-width="1.6" stroke-linecap="round"/></svg></div>
<div class="a" style="left:832px;top:100px;width:851px;height:20px;background:linear-gradient(#f8f8f8,#ececec);border-bottom:1px solid #a8a8a8"></div>
<div class="blk" style="left:832px;top:120px;width:832px;height:434px"></div>
<div class="a" style="left:1664px;top:120px;width:18px;height:434px;background:#f0f0f0"></div>
<div class="a" style="left:1669px;top:541px;border-left:4px solid transparent;border-right:4px solid transparent;border-top:4px solid #444"></div><div class="a" style="left:1669px;top:126px;border-left:4px solid transparent;border-right:4px solid transparent;border-bottom:4px solid #444"></div>
<div class="a" style="left:832px;top:554px;width:850px;height:16px;background:#eaeaea"></div>
<div class="a" style="left:840px;top:558px;border-top:4px solid transparent;border-bottom:4px solid transparent;border-right:4px solid #444"></div>
<div class="a" style="left:1055px;top:555px;width:400px;height:14px;border:1px solid #a8a8a8;border-radius:2px;background:linear-gradient(#f4f4f4,#d8d8d8)"></div>
<div class="a" style="left:1652px;top:558px;border-top:4px solid transparent;border-bottom:4px solid transparent;border-left:4px solid #444"></div>
<div class="a" style="left:963px;top:318px;width:32px;height:32px;border-radius:50%;background:radial-gradient(circle,#fff6e0 0,#e0c8a0 2px,#b09070 5px,rgba(100,80,55,.55) 9px,rgba(0,0,0,0) 15px)"></div>
<div class="a" style="left:1263px;top:331px;width:28px;height:28px;border-radius:50%;background:radial-gradient(circle,#b8c8f0 0,#8098d0 2px,#5064a0 5px,rgba(40,50,100,.5) 9px,rgba(0,0,0,0) 13px)"></div>
<div class="a" style="left:1448px;top:496px;width:24px;height:24px;border-radius:50%;background:radial-gradient(circle,#f0d0d0 0,#c89898 2px,#806060 5px,rgba(80,40,40,.4) 8px,rgba(0,0,0,0) 11px)"></div>
<svg class="a" style="left:1210px;top:330px" width="50" height="55" viewBox="1210 330 50 55">
<circle cx="1234" cy="351.7" r="12.3" fill="none" stroke="#fff" stroke-width="1.1"/>
<rect x="1227.5" y="345.5" width="14" height="14" fill="#000" stroke="#e8e040" stroke-width="1.2"/>
<circle cx="1234.3" cy="352.5" r="5" fill="#fff4ff"/><circle cx="1231.5" cy="350" r="3" fill="#fff"/><circle cx="1237" cy="350" r="3" fill="#fff"/><circle cx="1234" cy="355" r="3" fill="#f8f0ff"/>
<circle cx="1234.8" cy="369.5" r="8.3" fill="none" stroke="#e8e840" stroke-width="1.1"/>
<circle cx="1234.8" cy="369.5" r="6.6" fill="none" stroke="#e8e840" stroke-width=".9"/>
<path d="M1228 369.5h4M1237.5 369.5h4M1234.8 374v4M1234.8 362v3" stroke="#e8e840" stroke-width=".9"/>
</svg>
<span class="t" style="left:1246px;top:365px;font-size:8.5px;color:#a8a8a8">CH_CYG</span>
<div class="a" style="left:1182px;top:145px;width:2px;height:2px;background:#ccc"></div>

<svg class="a" style="left:832px;top:100px" width="460" height="20" viewBox="832 100 460 20">
<circle cx="842.5" cy="107.5" r="4.8" fill="#fff" stroke="#000" stroke-width="1.4"/><path d="M840 107.5h5" stroke="#c02030" stroke-width="1.4"/><path d="M846 111l4.5 5" stroke="#000" stroke-width="2"/>
<circle cx="864" cy="107.5" r="4.8" fill="#fff" stroke="#000" stroke-width="1.4"/><path d="M861.5 107.5h5M864 105v5" stroke="#c02030" stroke-width="1.4"/><path d="M867.5 111l4.5 5" stroke="#000" stroke-width="2"/>
<rect x="882" y="103" width="14" height="14" fill="#000"/><path d="M884 107h4M886 105v4M890 112h4M892 110v4" stroke="#e8e040" stroke-width="1"/><rect x="883.5" y="113.5" width="3" height="3" fill="none" stroke="#20d020"/><path d="M891 106h4" stroke="#e02020" stroke-width="1.5"/>
<circle cx="912" cy="109.5" r="6.5" fill="#fff" stroke="#000" stroke-width="1.3"/><ellipse cx="912" cy="109.5" rx="3" ry="6.5" fill="none" stroke="#000"/><path d="M905.5 109.5h13M906.5 106h11M906.5 113h11" stroke="#000" stroke-width=".8"/>
<text x="936" y="107" font-size="7" font-weight="bold" fill="#d02020" font-family="Liberation Sans">UGC</text><text x="936" y="117" font-size="8" fill="#102080" font-family="Liberation Sans">R</text><text x="941" y="118" font-size="8" fill="#102080" font-family="Liberation Sans">K</text><text x="947" y="117" font-size="8" font-weight="bold" fill="#000" font-family="Liberation Sans">?</text>
<path d="M951 103l8 8" stroke="#d02020" stroke-width="2.5"/><path d="M956 118l3 -8l4 8M954 118h10" stroke="#000" stroke-width="1.6" fill="none"/>
<path d="M977.5 102.5h7l2 3v5h-9z" fill="#fff" stroke="#000"/><rect x="973.5" y="110.5" width="16" height="6" rx="1" fill="#fff" stroke="#000" stroke-width="1.2"/><path d="M975 114h13" stroke="#000"/>
<circle cx="1003.5" cy="105" r="2.5" fill="#000"/><circle cx="1003.5" cy="111" r="2.5" fill="#000"/><rect x="1002" y="115" width="3" height="3" fill="#000"/>
<path d="M1031 104 a6.5 6.5 0 1 0 2.5 5" fill="none" stroke="#e01010" stroke-width="2"/><path d="M1030 101l4 3l-4 2z" fill="#e01010"/><path d="M1026.5 105v5" stroke="#000" stroke-width="2"/><rect x="1025.5" y="112" width="2" height="2" fill="#000"/>
<rect x="1042" y="106" width="4" height="9" fill="#105010"/><path d="M1046 107h6l4 1h2v2h-4v1h2v2h-2v1h-8z" fill="#f0f080" stroke="#000" stroke-width=".8"/>
<path d="M1066 116l10 -11l4 2l-10 11z" fill="#e83060" stroke="#000" stroke-width=".8"/><path d="M1066 116l3 2" stroke="#e0e040" stroke-width="2"/><circle cx="1078" cy="104" r="3" fill="#c02040"/>
<path d="M1093 106v10l7 -5z" fill="#000"/>
<rect x="1113.5" y="104.5" width="14" height="12" fill="#fff" stroke="#102080"/><rect x="1113.5" y="104.5" width="14" height="3" fill="#102080"/><path d="M1117 108v8M1120.5 108v8M1124 108v8M1114 112h13" stroke="#102080" stroke-width=".8"/>
<ellipse cx="1140" cy="110" rx="6" ry="4" fill="none" stroke="#000"/><circle cx="1144" cy="109" r="3.5" fill="none" stroke="#c02020"/><rect x="1143" y="108" width="2" height="2" fill="#000"/><path d="M1141 112v6M1147 112v6" stroke="#c02020"/>
<rect x="1157" y="102" width="16" height="16" fill="#000"/><circle cx="1165" cy="110" r="6" fill="none" stroke="#e8e020" stroke-width="1.3"/><path d="M1165 103v4M1165 113v4M1158 110h4M1168 110h4" stroke="#e8e020"/>
<path d="M1179.5 101v18" stroke="#c0c0c0"/>
<rect x="1198.5" y="100.5" width="19" height="18" rx="2" fill="#f0f0f0" stroke="#a0a0a0"/><path d="M1202 103l0 10l3 -2l3 5l2 -1l-3 -5l4 -1z" fill="#fff" stroke="#000"/>
<rect x="1221.5" y="100.5" width="21" height="18" rx="2" fill="#f0f0f0" stroke="#a0a0a0"/><path d="M1225 116v-6l2 -5h3v11zM1239 116v-6l-2 -5h-3v11z" fill="#000"/><rect x="1229" y="108" width="6" height="3" fill="#000"/>
<rect x="1245.5" y="100.5" width="20" height="18" rx="2" fill="#a8d8f8" stroke="#5a8ab8"/><path d="M1255.5 102v15M1248 109.5h15" stroke="#000"/><rect x="1253.5" y="107.5" width="4" height="4" fill="#000"/>
<rect x="1267.5" y="100.5" width="17" height="18" rx="2" fill="#f0f0f0" stroke="#a0a0a0"/><path d="M1270 105l10 10l3 -3l-10 -10z" fill="#fff" stroke="#000"/><path d="M1274 106l-1.5 1.5M1276 108l-1.5 1.5M1278 110l-1.5 1.5" stroke="#000"/>
</svg>

<!-- TI -->
<div class="win" style="left:1427px;top:132px;width:480px;height:363px;border-color:#59677a;border-radius:5px 0 0 0;background:linear-gradient(#d9e4f0,#c3d5ea 26px,#d8e4f0 120px,#f2f5f8 100%)"></div>
<svg class="a" style="left:1432px;top:136px" width="16" height="17" viewBox="0 0 16 17"><path d="M8 1 L15.5 16.5 L0.5 16.5Z" fill="url(#pg)"/><path d="M8 1 L15.5 16.5 M0.5 16.3 L15.5 16.3" stroke="#000" stroke-width="1.2"/></svg>
<span class="wt" style="left:1451px;top:140px;font-size:12px;color:#3c4654">Tracking Inspector</span>
<div class="wbtn" style="left:1878px;top:136px;width:30px;height:17px;border-color:#7e8ea2;background:linear-gradient(#dfe8f2,#cbd8e7);font-size:13px;line-height:15px;color:#555;font-weight:bold;padding-left:9px"><svg class="a" style="left:0;top:0" width="28" height="15"><path d="M10.5 4.0L17.5 11.0M17.5 4.0L10.5 11.0" stroke="#4e5660" stroke-width="3.4" stroke-linecap="round"/><path d="M10.5 4.0L17.5 11.0M17.5 4.0L10.5 11.0" stroke="#f4f6f8" stroke-width="1.6" stroke-linecap="round"/></svg></div>
<div class="a" style="left:1431px;top:160px;width:470px;height:334px;background:#f0f0f0;border-bottom:1px solid #8a8a8a"></div>
<div class="a" style="left:1432px;top:161px;width:45px;height:17px;border:1px solid #c8c8c8;border-right-color:#a0a0a0;background:#f0f0f0"></div>
<div class="a" style="left:1477px;top:161px;width:424px;height:17px;border-bottom:1px solid #dcdcdc"></div>
<span class="t" style="left:1437px;top:164px;font-size:12px">Etat</span>
<span class="t" style="left:1550px;top:164px;font-size:12px;font-weight:bold">DX=-1.79  DY=6.16 RA=65.58ms  DEC=206.71ms</span>
<span class="t" style="left:1434px;top:183px">Positions Axe RA :</span>
<span class="t" style="left:1541px;top:183px;font-size:12px;font-weight:bold">-1.79 Pix</span>
<span class="t" style="left:1681px;top:183px;font-size:12px;font-weight:bold;color:#e02020">+66ms</span>
<span class="t" style="left:1768px;top:183px;font-size:12px">Répartition</span>
<div class="btn" style="left:1850px;top:181px;width:14px;height:17px;font-size:11px;line-height:15px">+</div>
<div class="btn" style="left:1866px;top:181px;width:14px;height:17px;font-size:11px;line-height:15px">-</div>
<svg class="a" style="left:1434px;top:202px;background:#000;border:1px solid #888" width="307" height="83" viewBox="0 0 305 81"><line x1="0" y1="23" x2="305" y2="23" stroke="#f0f060" stroke-width="1" stroke-dasharray="5 3" shape-rendering="crispEdges"/><line x1="0" y1="29.5" x2="305" y2="29.5" stroke="#f0f060" stroke-width="1" stroke-dasharray="5 3" shape-rendering="crispEdges"/><line x1="0" y1="37" x2="305" y2="37" stroke="#f0f060" stroke-width="1" stroke-dasharray="5 3" shape-rendering="crispEdges"/><line x1="0" y1="52" x2="305" y2="52" stroke="#f0f060" stroke-width="1" stroke-dasharray="5 3" shape-rendering="crispEdges"/><line x1="0" y1="59" x2="305" y2="59" stroke="#f0f060" stroke-width="1" stroke-dasharray="5 3" shape-rendering="crispEdges"/><line x1="0" y1="66" x2="305" y2="66" stroke="#f0f060" stroke-width="1" stroke-dasharray="5 3" shape-rendering="crispEdges"/><line x1="0" y1="44.5" x2="305" y2="44.5" stroke="#fff" stroke-width="2.2"/><polyline points="0.0,28.0 2.0,16.3 4.1,50.3 6.1,10.9 8.2,42.4 10.2,30.9 12.3,9.9 14.3,40.5 16.4,8.5 18.4,35.5 20.5,10.8 22.5,12.2 24.6,34.9 26.6,62.2 28.7,14.4 30.7,21.2 32.8,48.7 34.8,70.4 36.8,45.2 38.9,33.0 40.9,72.4 43.0,9.2 45.0,64.4 47.1,25.7 49.1,15.8 51.2,14.0 53.2,27.0 55.3,61.5 57.3,18.3 59.4,45.5 61.4,49.4 63.5,31.3 65.5,43.2 67.6,10.3 69.6,10.1 71.6,20.0 73.7,52.3 75.7,35.1 77.8,27.4 79.8,45.8 81.9,36.8 83.9,26.4 86.0,60.0 88.0,53.5 90.1,22.6 92.1,45.1 94.2,41.7 96.2,65.5 98.3,55.6 100.3,25.6 102.3,72.7 104.4,14.0 106.4,34.4 108.5,57.5 110.5,16.3 112.6,39.2 114.6,8.7 116.7,51.4 118.7,58.0 120.8,45.0 122.8,65.5 124.9,27.3 126.9,53.3 129.0,46.4 131.0,45.4 133.1,37.0 135.1,63.1 137.1,70.2 139.2,38.2 141.2,51.2 143.3,10.1 145.3,53.7 147.4,50.0 149.4,73.5 151.5,61.9 153.5,25.4 155.6,32.2 157.6,51.5 159.7,7.5 161.7,37.4 163.8,17.4 165.8,14.0 167.9,10.0 169.9,58.2 171.9,14.8 174.0,22.8 176.0,32.6 178.1,65.3 180.1,11.5 182.2,36.5 184.2,43.4 186.3,66.1 188.3,61.7 190.4,64.8 192.4,24.9 194.5,34.2 196.5,30.4 198.6,66.1 200.6,71.1 202.7,16.3 204.7,18.0 206.7,21.8 208.8,21.9 210.8,39.0 212.9,46.1 214.9,23.9 217.0,6.3 219.0,34.5 221.1,31.1 223.1,44.5 225.2,70.8 227.2,53.0 229.3,41.1 231.3,48.0 233.4,52.0 235.4,9.7 237.4,67.2 239.5,59.0 241.5,65.5 243.6,60.3 245.6,32.7 247.7,33.1 249.7,13.0 251.8,49.1 253.8,10.2 255.9,10.6 257.9,20.2 260.0,17.0 262.0,29.1 264.1,9.6 266.1,6.0 268.2,16.3 270.2,12.9 272.2,30.7 274.3,7.7 276.3,65.5 278.4,47.8 280.4,16.1 282.5,23.2 284.5,29.6 286.6,30.8 288.6,14.4 290.7,63.7 292.7,73.5 294.8,37.7 296.8,38.9 298.9,11.8 300.9,12.9 303.0,29.3 305.0,24.0" fill="none" stroke="#20a020" stroke-width="1"/></svg>
<div class="a" style="left:1743px;top:200px;width:13px;height:30px;background:#c2dcc2;border:1px solid #606060"></div>
<div class="a" style="left:1743px;top:253px;width:13px;height:31px;background:#c2dcc2;border:1px solid #606060"></div>
<div class="a" style="left:1743px;top:236px;width:12px;height:12px;border-radius:50%;border:1px solid #aaa"></div>
<div class="blk" style="left:1758px;top:203px;width:82px;height:81px;border:1px solid #666"></div>
<span class="t" style="left:1762px;top:206px;font-size:9px;color:#e02020">Bar.</span>
<div class="a" style="left:1786px;top:231px;width:26px;height:26px;border:1px solid #fff"></div>
<svg class="a" style="left:1758px;top:203px" width="82" height="81"><rect x="73" y="16" width="1" height="1" fill="#3a8a3a"/><rect x="75" y="61" width="1" height="1" fill="#3a8a3a"/><rect x="12" y="42" width="1" height="1" fill="#3a8a3a"/><rect x="51" y="74" width="1" height="1" fill="#3a8a3a"/><rect x="31" y="50" width="1" height="1" fill="#3a8a3a"/><rect x="71" y="66" width="1" height="1" fill="#3a8a3a"/><rect x="76" y="42" width="1" height="1" fill="#3a8a3a"/><rect x="53" y="24" width="1" height="1" fill="#3a8a3a"/><rect x="58" y="67" width="1" height="1" fill="#3a8a3a"/><rect x="52" y="60" width="1" height="1" fill="#3a8a3a"/><rect x="19" y="73" width="1" height="1" fill="#3a8a3a"/><rect x="78" y="78" width="1" height="1" fill="#3a8a3a"/><rect x="44" y="65" width="1" height="1" fill="#3a8a3a"/><rect x="27" y="74" width="1" height="1" fill="#3a8a3a"/><rect x="69" y="34" width="1" height="1" fill="#3a8a3a"/><rect x="8" y="41" width="1" height="1" fill="#3a8a3a"/><rect x="45" y="64" width="1" height="1" fill="#3a8a3a"/><rect x="40" y="12" width="1" height="1" fill="#3a8a3a"/><rect x="65" y="14" width="1" height="1" fill="#3a8a3a"/><rect x="64" y="22" width="1" height="1" fill="#3a8a3a"/><rect x="28" y="65" width="1" height="1" fill="#3a8a3a"/><rect x="13" y="20" width="1" height="1" fill="#3a8a3a"/><rect x="42" y="61" width="1" height="1" fill="#3a8a3a"/><rect x="68" y="58" width="1" height="1" fill="#3a8a3a"/><rect x="76" y="44" width="1" height="1" fill="#3a8a3a"/><rect x="76" y="16" width="1" height="1" fill="#3a8a3a"/><rect x="19" y="47" width="1" height="1" fill="#3a8a3a"/><rect x="25" y="61" width="1" height="1" fill="#3a8a3a"/><rect x="52" y="47" width="1" height="1" fill="#3a8a3a"/><rect x="68" y="49" width="1" height="1" fill="#3a8a3a"/><rect x="26" y="37" width="1" height="1" fill="#3a8a3a"/><rect x="68" y="73" width="1" height="1" fill="#3a8a3a"/><rect x="18" y="70" width="1" height="1" fill="#3a8a3a"/><rect x="78" y="47" width="1" height="1" fill="#3a8a3a"/><rect x="47" y="24" width="1" height="1" fill="#3a8a3a"/><rect x="44" y="45" width="1" height="1" fill="#3a8a3a"/><rect x="49" y="12" width="1" height="1" fill="#3a8a3a"/><rect x="78" y="46" width="1" height="1" fill="#3a8a3a"/><rect x="33" y="66" width="1" height="1" fill="#3a8a3a"/><rect x="46" y="44" width="1" height="1" fill="#3a8a3a"/><line x1="30" y1="2" x2="41" y2="40" stroke="#e0e040"/></svg>
<div class="chk" style="left:1849px;top:206px"></div>
<span class="t" style="left:1865px;top:207px;font-size:12px">Lier</span>
<div class="btn" style="left:1849px;top:222px;width:60px;height:17px;font-size:12px;line-height:15px;text-align:left;padding-left:2px">Graphique</div>
<div class="btn" style="left:1849px;top:245px;width:60px;height:17px;font-size:12px;line-height:15px;border-color:#3c7fb1;box-shadow:inset 0 0 0 1px #8fd0f2;background:linear-gradient(#eaf6fd,#d9f0fc 50%,#bee6fd 50%,#a7d9f5)">Reset</div>
<div class="btn" style="left:1849px;top:265px;width:60px;height:17px;font-size:12px;line-height:15px">Sauver</div>
<span class="t" style="left:1432px;top:289px;font-size:11px">Positions Axe DEC :</span>
<span class="t" style="left:1538px;top:288px;font-size:12px;font-weight:bold">6.16 Pix</span>
<span class="t" style="left:1680px;top:288px;font-size:12px;font-weight:bold;color:#e02020">+207ms</span>
<svg class="a" style="left:1434px;top:305px;background:#000;border:1px solid #888" width="307" height="83" viewBox="0 0 305 81"><line x1="0" y1="16.5" x2="305" y2="16.5" stroke="#f0f060" stroke-width="1" stroke-dasharray="5 3" shape-rendering="crispEdges"/><line x1="0" y1="23" x2="305" y2="23" stroke="#f0f060" stroke-width="1" stroke-dasharray="5 3" shape-rendering="crispEdges"/><line x1="0" y1="30" x2="305" y2="30" stroke="#f0f060" stroke-width="1" stroke-dasharray="5 3" shape-rendering="crispEdges"/><line x1="0" y1="43" x2="305" y2="43" stroke="#f0f060" stroke-width="1" stroke-dasharray="5 3" shape-rendering="crispEdges"/><line x1="0" y1="49.5" x2="305" y2="49.5" stroke="#f0f060" stroke-width="1" stroke-dasharray="5 3" shape-rendering="crispEdges"/><line x1="0" y1="56.5" x2="305" y2="56.5" stroke="#f0f060" stroke-width="1" stroke-dasharray="5 3" shape-rendering="crispEdges"/><line x1="0" y1="36" x2="305" y2="36" stroke="#fff" stroke-width="2.2"/><polyline points="0.0,60.4 2.0,15.0 4.1,5.6 6.1,68.7 8.2,39.9 10.2,14.0 12.3,40.9 14.3,5.8 16.4,39.9 18.4,70.5 20.5,62.7 22.5,51.3 24.6,21.8 26.6,28.9 28.7,15.4 30.7,56.5 32.8,40.2 34.8,57.0 36.8,26.4 38.9,19.2 40.9,59.2 43.0,71.0 45.0,62.0 47.1,58.8 49.1,59.6 51.2,54.3 53.2,19.4 55.3,39.2 57.3,28.2 59.4,6.0 61.4,5.9 63.5,23.0 65.5,21.6 67.6,51.1 69.6,69.0 71.6,34.4 73.7,67.7 75.7,71.2 77.8,68.9 79.8,28.8 81.9,19.0 83.9,19.4 86.0,17.4 88.0,17.9 90.1,46.4 92.1,65.2 94.2,61.1 96.2,36.6 98.3,48.4 100.3,58.4 102.3,9.8 104.4,48.9 106.4,65.9 108.5,57.2 110.5,55.0 112.6,36.5 114.6,16.1 116.7,57.7 118.7,26.6 120.8,58.5 122.8,70.1 124.9,30.9 126.9,31.3 129.0,68.4 131.0,53.3 133.1,15.6 135.1,12.6 137.1,14.3 139.2,65.5 141.2,58.8 143.3,13.9 145.3,60.2 147.4,70.7 149.4,48.7 151.5,27.8 153.5,41.3 155.6,12.9 157.6,5.0 159.7,70.0 161.7,48.2 163.8,39.8 165.8,67.5 167.9,33.5 169.9,63.3 171.9,60.2 174.0,18.4 176.0,21.1 178.1,23.9 180.1,20.4 182.2,43.9 184.2,21.6 186.3,32.5 188.3,12.9 190.4,65.9 192.4,28.1 194.5,35.2 196.5,43.7 198.6,65.5 200.6,32.6 202.7,66.4 204.7,38.1 206.7,40.2 208.8,39.6 210.8,5.3 212.9,33.9 214.9,16.5 217.0,4.3 219.0,58.3 221.1,15.7 223.1,36.2 225.2,53.3 227.2,41.8 229.3,26.2 231.3,39.2 233.4,41.8 235.4,57.3 237.4,11.2 239.5,42.1 241.5,20.9 243.6,22.8 245.6,56.5 247.7,38.5 249.7,42.2 251.8,55.7 253.8,66.0 255.9,34.1 257.9,45.7 260.0,38.4 262.0,38.8 264.1,51.1 266.1,34.8 268.2,40.3 270.2,36.5 272.2,68.0 274.3,51.5 276.3,63.6 278.4,68.1 280.4,21.7 282.5,42.0 284.5,68.1 286.6,61.1 288.6,13.3 290.7,12.3 292.7,34.1 294.8,8.9 296.8,20.4 298.9,9.0 300.9,49.5 303.0,57.3 305.0,65.0" fill="none" stroke="#20a020" stroke-width="1"/></svg>
<div class="a" style="left:1743px;top:303px;width:13px;height:31px;background:#c2dcc2;border:1px solid #606060"></div>
<div class="a" style="left:1743px;top:355px;width:13px;height:31px;background:#c2dcc2;border:1px solid #606060"></div>
<div class="a" style="left:1743px;top:339px;width:12px;height:12px;border-radius:50%;border:1px solid #aaa"></div>
<span class="t" style="left:1434px;top:392px;font-size:12px">Flux</span>
<svg class="a" style="left:1434px;top:405px;background:#000;border:1px solid #888" width="307" height="77" viewBox="0 0 305 75"><polyline points="0.0,60.1 2.2,57.6 4.4,60.9 6.6,26.9 8.8,66.4 11.0,19.2 13.2,38.0 15.4,46.1 17.6,71.0 19.7,61.6 21.9,8.6 24.1,46.6 26.3,17.0 28.5,25.2 30.7,39.2 32.9,62.3 35.1,62.9 37.3,52.5 39.5,71.9 41.7,64.1 43.9,16.5 46.1,10.6 48.3,55.8 50.5,55.4 52.7,67.9 54.9,15.8 57.1,57.7 59.2,55.7 61.4,31.3 63.6,52.3 65.8,20.3 68.0,65.5 70.2,17.1 72.4,10.2 74.6,49.8 76.8,57.1 79.0,35.1 81.2,31.8 83.4,23.6 85.6,18.0 87.8,66.7 90.0,40.7 92.2,22.6 94.4,62.3 96.5,44.6 98.7,17.6 100.9,53.9 103.1,10.7 105.3,29.6 107.5,30.2 109.7,24.8 111.9,58.1 114.1,68.4 116.3,13.7 118.5,67.1 120.7,15.0 122.9,70.4 125.1,43.2 127.3,61.3 129.5,11.8 131.7,43.6 133.8,34.1 136.0,38.5 138.2,52.9 140.4,34.7 142.6,16.5 144.8,68.0 147.0,52.6 149.2,50.5 151.4,18.0 153.6,10.2 155.8,21.6 158.0,48.6 160.2,41.0 162.4,62.7 164.6,60.8 166.8,9.3 169.0,41.7 171.2,71.0 173.3,31.5 175.5,64.7 177.7,45.0 179.9,28.2 182.1,69.3 184.3,64.0 186.5,69.7 188.7,33.4 190.9,68.5 193.1,37.2 195.3,60.5 197.5,55.3 199.7,61.4 201.9,31.7 204.1,68.8 206.3,55.5 208.5,60.7 210.6,39.0 212.8,35.8 215.0,30.2 217.2,51.2 219.4,58.4 221.6,69.9 223.8,8.4 226.0,33.1 228.2,14.3 230.4,62.8 232.6,41.0 234.8,32.6 237.0,23.9 239.2,69.7 241.4,55.4 243.6,53.5 245.8,26.4 247.9,67.9 250.1,70.7 252.3,14.3 254.5,52.4 256.7,23.3 258.9,58.3 261.1,39.0 263.3,57.2 265.5,9.2 267.7,46.1 269.9,60.4 272.1,37.3 274.3,13.0 276.5,45.7 278.7,51.4 280.9,9.7 283.1,57.1 285.3,62.7 287.4,70.9 289.6,50.4 291.8,49.8 294.0,25.5 296.2,49.8 298.4,20.8 300.6,59.1 302.8,65.4 305.0,37.3" fill="none" stroke="#a020a0" stroke-width="1"/></svg>
<div class="a" style="left:1757px;top:290px;width:139px;height:36px;border:1px solid #fff;box-shadow:inset 1px 1px 0 #c8c8c8"></div>
<span class="t" style="left:1766px;top:294px;font-size:12px">Décalage (Pixels,angle)</span>
<span class="t" style="left:1789px;top:309px;font-size:12px;font-weight:bold">6.42  106.19°</span>
<div class="a" style="left:1757px;top:328px;width:139px;height:36px;border:1px solid #fff;box-shadow:inset 1px 1px 0 #c8c8c8"></div>
<span class="t" style="left:1782px;top:332px;font-size:12px">Direction moyenne</span>
<span class="t" style="left:1814px;top:347px;font-size:12px">203 °</span>
<div class="a" style="left:1757px;top:370px;width:139px;height:39px;border:1px solid #fff;box-shadow:inset 1px 1px 0 #c8c8c8"></div>
<span class="t" style="left:1780px;top:374px;font-size:12px">Erreur de suivi moyen</span>
<span class="t" style="left:1784px;top:391px;font-size:12px;font-weight:bold">4.07 Pix  3.45''</span>
<div class="a" style="left:1757px;top:414px;width:139px;height:50px;border:1px solid #fff;box-shadow:inset 1px 1px 0 #c8c8c8"></div>
<span class="t" style="left:1780px;top:417px;font-size:12px">Moniteur de nuages</span>
<span class="t" style="left:1808px;top:432px;font-size:12px">29 ADU</span>
<span class="t" style="left:1796px;top:446px;font-size:12px">102 ADU rms</span>
<div class="btn" style="left:1757px;top:468px;width:74px;height:18px;font-size:12px;line-height:16px">Plus &gt;&gt;&gt;</div>

<!-- CHCYG -->
<div class="win" style="left:655px;top:569px;width:1231px;height:465px;border-color:#44505e;border-radius:6px 6px 0 0;background:linear-gradient(#c4d8ee,#b4cde8 28px,#b8d0ea)"></div>
<svg class="a" style="left:666px;top:579px" width="16" height="17" viewBox="0 0 16 17"><path d="M8 1 L15.5 16.5 L0.5 16.5Z" fill="url(#pg)"/><path d="M8 1 L15.5 16.5 M0.5 16.3 L15.5 16.3" stroke="#000" stroke-width="1.2"/></svg>
<span class="wt" style="left:685px;top:581px;font-size:11.7px;color:#0c1830">CHCyg-37 | 1374x1099 - Monochrome - Réels(32bits)   [Zoom = 1]</span>
<div class="wbtn" style="left:1779px;top:579px;width:31px;height:17px;border-color:#6c7e94;background:linear-gradient(#d8e6f4,#b8cde6 50%,#a9c2e0)"><div class="a" style="left:9px;top:8px;width:12px;height:4px;border:1px solid #39455a;background:#fff"></div></div>
<div class="wbtn" style="left:1813px;top:579px;width:30px;height:17px;border-color:#6c7e94;background:linear-gradient(#d8e6f4,#b8cde6 50%,#a9c2e0)"><div class="a" style="left:9px;top:3px;width:11px;height:10px;border:1px solid #39455a;box-shadow:inset 0 0 0 2px #fff,inset 0 0 0 3px #39455a"></div></div>
<div class="wbtn" style="left:1845px;top:579px;width:32px;height:17px;border-color:#6a2a20;background:linear-gradient(#e8a090,#d0583e 50%,#c03a20);text-align:center;font-size:13px;line-height:15px;color:#fff;font-weight:bold"><svg class="a" style="left:0;top:0" width="30" height="15"><path d="M11.5 4.0L18.5 11.0M18.5 4.0L11.5 11.0" stroke="#6a2010" stroke-width="3.6" stroke-linecap="round"/><path d="M11.5 4.0L18.5 11.0M18.5 4.0L11.5 11.0" stroke="#ffffff" stroke-width="2.0" stroke-linecap="round"/></svg></div>
<svg class="a" style="left:664px;top:600px;background:#050505" width="1195" height="401" viewBox="0 0 1195 401">
<defs><filter id="bl" x="-2%" y="-20%" width="104%" height="140%"><feGaussianBlur stdDeviation="1.0"/></filter><filter id="bl2" x="-2%" y="-20%" width="104%" height="140%"><feGaussianBlur stdDeviation="1.8"/></filter><linearGradient id="grad0" gradientUnits="userSpaceOnUse" x1="0" x2="600" y1="0" y2="0"><stop offset="0" stop-color="#cfcfcf"/><stop offset="1" stop-color="#ffffff"/></linearGradient><linearGradient id="grad2" gradientUnits="userSpaceOnUse" x1="0" x2="450" y1="0" y2="0"><stop offset="0" stop-color="#c8c8c8"/><stop offset="1" stop-color="#ffffff"/></linearGradient><linearGradient id="grad3" gradientUnits="userSpaceOnUse" x1="300" x2="900" y1="0" y2="0"><stop offset="0" stop-color="#808080"/><stop offset="1" stop-color="#c0c0c0"/></linearGradient></defs>
<g filter="url(#bl)">
<polygon points="0,4.8 16,3.1 32,1.5 48,-0.1 64,-1.7 80,-3.2 96,-4.7 112,-6.2 128,-7.6 144,-9.0 160,-10.4 176,-11.7 192,-13.0 208,-14.3 224,-15.5 240,-16.7 256,-17.9 272,-19.0 288,-20.1 304,-21.2 320,-22.2 336,-23.2 352,-24.2 368,-25.1 384,-26.0 400,-26.9 416,-27.7 432,-28.5 448,-29.3 464,-30.0 480,-30.7 496,-31.3 512,-32.0 528,-32.6 544,-33.1 560,-33.7 576,-34.1 592,-34.6 608,-35.0 624,-35.4 640,-35.8 656,-36.1 672,-36.4 688,-36.6 704,-36.9 720,-37.1 736,-37.2 752,-37.3 768,-37.4 784,-37.5 800,-37.5 816,-37.5 832,-37.4 848,-37.4 864,-37.2 880,-37.1 896,-36.9 912,-36.7 928,-36.5 944,-36.2 960,-35.9 976,-35.5 992,-35.1 1008,-34.7 1024,-34.3 1040,-33.8 1056,-33.3 1072,-32.7 1088,-32.1 1104,-31.5 1120,-30.9 1136,-30.2 1152,-29.4 1168,-28.7 1184,-27.9 1195,-27.3 1195,-19.0 1184,-19.6 1168,-20.5 1152,-21.4 1136,-22.2 1120,-23.0 1104,-23.7 1088,-24.4 1072,-25.1 1056,-25.7 1040,-26.3 1024,-26.8 1008,-27.3 992,-27.8 976,-28.2 960,-28.6 944,-29.0 928,-29.3 912,-29.6 896,-29.8 880,-30.0 864,-30.2 848,-30.3 832,-30.4 816,-30.5 800,-30.5 784,-30.5 768,-30.4 752,-30.3 736,-30.2 720,-30.0 704,-29.8 688,-29.5 672,-29.2 656,-28.9 640,-28.5 624,-28.1 608,-27.7 592,-27.2 576,-26.7 560,-26.1 544,-25.5 528,-24.9 512,-24.2 496,-23.5 480,-22.8 464,-22.0 448,-21.2 432,-20.3 416,-19.4 400,-18.5 384,-17.5 368,-16.5 352,-15.4 336,-14.3 320,-13.2 304,-12.0 288,-10.8 272,-9.6 256,-8.3 240,-7.0 224,-5.6 208,-4.2 192,-2.8 176,-1.3 160,0.2 144,1.7 128,3.3 112,5.0 96,6.6 80,8.3 64,10.1 48,11.8 32,13.7 16,15.5 0,17.4" fill="#4a4a4a"/>
<polygon points="0,23.9 16,22.1 32,20.4 48,18.7 64,17.1 80,15.5 96,13.9 112,12.4 128,10.9 144,9.4 160,7.9 176,6.5 192,5.2 208,3.9 224,2.6 240,1.3 256,0.1 272,-1.1 288,-2.3 304,-3.4 320,-4.5 336,-5.5 352,-6.5 368,-7.5 384,-8.4 400,-9.3 416,-10.2 432,-11.1 448,-11.9 464,-12.6 480,-13.3 496,-14.0 512,-14.7 528,-15.3 544,-15.9 560,-16.5 576,-17.0 592,-17.5 608,-17.9 624,-18.3 640,-18.7 656,-19.0 672,-19.3 688,-19.6 704,-19.8 720,-20.0 736,-20.2 752,-20.3 768,-20.4 784,-20.5 800,-20.5 816,-20.5 832,-20.4 848,-20.4 864,-20.2 880,-20.1 896,-19.9 912,-19.7 928,-19.4 944,-19.1 960,-18.8 976,-18.4 992,-18.0 1008,-17.6 1024,-17.1 1040,-16.6 1056,-16.0 1072,-15.5 1088,-14.9 1104,-14.2 1120,-13.5 1136,-12.8 1152,-12.0 1168,-11.3 1184,-10.4 1195,-9.8 1195,-1.5 1184,-2.2 1168,-3.1 1152,-4.0 1136,-4.8 1120,-5.6 1104,-6.4 1088,-7.1 1072,-7.8 1056,-8.5 1040,-9.1 1024,-9.7 1008,-10.2 992,-10.7 976,-11.1 960,-11.6 944,-11.9 928,-12.3 912,-12.6 896,-12.8 880,-13.0 864,-13.2 848,-13.3 832,-13.4 816,-13.5 800,-13.5 784,-13.5 768,-13.4 752,-13.3 736,-13.2 720,-13.0 704,-12.8 688,-12.5 672,-12.2 656,-11.8 640,-11.5 624,-11.0 608,-10.6 592,-10.1 576,-9.5 560,-8.9 544,-8.3 528,-7.7 512,-7.0 496,-6.2 480,-5.4 464,-4.6 448,-3.8 432,-2.9 416,-1.9 400,-0.9 384,0.1 368,1.1 352,2.2 336,3.4 320,4.6 304,5.8 288,7.0 272,8.3 256,9.7 240,11.1 224,12.5 208,13.9 192,15.4 176,17.0 160,18.6 144,20.2 128,21.8 112,23.5 96,25.3 80,27.0 64,28.9 48,30.7 32,32.6 16,34.5 0,36.5" fill="#585858"/>
<polygon points="0,43.4 16,41.6 32,39.8 48,38.0 64,36.2 80,34.5 96,32.9 112,31.2 128,29.6 144,28.1 160,26.6 176,25.1 192,23.6 208,22.2 224,20.9 240,19.5 256,18.2 272,17.0 288,15.8 304,14.6 320,13.4 336,12.3 352,11.3 368,10.2 384,9.2 400,8.3 416,7.4 432,6.5 448,5.6 464,4.8 480,4.1 496,3.3 512,2.6 528,2.0 544,1.4 560,0.8 576,0.2 592,-0.3 608,-0.8 624,-1.2 640,-1.6 656,-1.9 672,-2.3 688,-2.6 704,-2.8 720,-3.0 736,-3.2 752,-3.3 768,-3.4 784,-3.5 800,-3.5 816,-3.5 832,-3.4 848,-3.3 864,-3.2 880,-3.1 896,-2.9 912,-2.6 928,-2.3 944,-2.0 960,-1.7 976,-1.3 992,-0.9 1008,-0.4 1024,0.1 1040,0.6 1056,1.2 1072,1.8 1088,2.5 1104,3.2 1120,3.9 1136,4.6 1152,5.4 1168,6.3 1184,7.1 1195,7.8 1195,14.9 1184,14.2 1168,13.3 1152,12.4 1136,11.5 1120,10.6 1104,9.8 1088,9.1 1072,8.4 1056,7.7 1040,7.1 1024,6.5 1008,5.9 992,5.4 976,4.9 960,4.5 944,4.1 928,3.8 912,3.5 896,3.2 880,3.0 864,2.8 848,2.7 832,2.6 816,2.5 800,2.5 784,2.5 768,2.6 752,2.7 736,2.9 720,3.0 704,3.3 688,3.5 672,3.9 656,4.2 640,4.6 624,5.0 608,5.5 592,6.0 576,6.6 560,7.2 544,7.9 528,8.5 512,9.3 496,10.0 480,10.8 464,11.7 448,12.6 432,13.5 416,14.5 400,15.5 384,16.6 368,17.7 352,18.8 336,20.0 320,21.2 304,22.5 288,23.8 272,25.1 256,26.5 240,27.9 224,29.4 208,30.9 192,32.4 176,34.0 160,35.7 144,37.3 128,39.0 112,40.8 96,42.6 80,44.4 64,46.3 48,48.2 32,50.2 16,52.2 0,54.2" fill="#6e6e6e"/>
<polygon points="0,59.4 16,57.5 32,55.6 48,53.7 64,51.9 80,50.1 96,48.4 112,46.7 128,45.0 144,43.4 160,41.8 176,40.3 192,38.8 208,37.3 224,35.9 240,34.5 256,33.2 272,31.9 288,30.6 304,29.4 320,28.2 336,27.0 352,25.9 368,24.9 384,23.8 400,22.8 416,21.9 432,20.9 448,20.1 464,19.2 480,18.4 496,17.7 512,16.9 528,16.3 544,15.6 560,15.0 576,14.4 592,13.9 608,13.4 624,13.0 640,12.5 656,12.2 672,11.8 688,11.5 704,11.3 720,11.1 736,10.9 752,10.7 768,10.6 784,10.6 800,10.6 816,10.6 832,10.6 848,10.7 864,10.8 880,11.0 896,11.2 912,11.5 928,11.8 944,12.1 960,12.4 976,12.8 992,13.3 1008,13.8 1024,14.3 1040,14.9 1056,15.4 1072,16.1 1088,16.8 1104,17.5 1120,18.2 1136,19.0 1152,19.9 1168,20.7 1184,21.6 1195,22.3 1195,30.0 1184,29.3 1168,28.3 1152,27.3 1136,26.4 1120,25.6 1104,24.7 1088,23.9 1072,23.2 1056,22.5 1040,21.8 1024,21.2 1008,20.6 992,20.1 976,19.6 960,19.1 944,18.7 928,18.4 912,18.1 896,17.8 880,17.6 864,17.4 848,17.2 832,17.1 816,17.1 800,17.1 784,17.1 768,17.1 752,17.3 736,17.4 720,17.6 704,17.9 688,18.1 672,18.5 656,18.8 640,19.3 624,19.7 608,20.2 592,20.8 576,21.3 560,22.0 544,22.6 528,23.4 512,24.1 496,24.9 480,25.8 464,26.7 448,27.6 432,28.6 416,29.6 400,30.6 384,31.7 368,32.9 352,34.1 336,35.3 320,36.6 304,37.9 288,39.3 272,40.7 256,42.1 240,43.6 224,45.1 208,46.7 192,48.3 176,50.0 160,51.7 144,53.4 128,55.2 112,57.1 96,58.9 80,60.9 64,62.8 48,64.8 32,66.9 16,69.0 0,71.1" fill="url(#grad0)"/>
<polygon points="0,78.5 16,76.5 32,74.5 48,72.6 64,70.6 80,68.8 96,67.0 112,65.2 128,63.4 144,61.7 160,60.1 176,58.4 192,56.9 208,55.3 224,53.8 240,52.4 256,51.0 272,49.6 288,48.2 304,47.0 320,45.7 336,44.5 352,43.3 368,42.2 384,41.1 400,40.1 416,39.0 432,38.1 448,37.2 464,36.3 480,35.4 496,34.6 512,33.9 528,33.1 544,32.5 560,31.8 576,31.2 592,30.7 608,30.2 624,29.7 640,29.2 656,28.9 672,28.5 688,28.2 704,27.9 720,27.7 736,27.5 752,27.3 768,27.2 784,27.2 800,27.2 816,27.2 832,27.2 848,27.3 864,27.5 880,27.6 896,27.9 912,28.1 928,28.4 944,28.8 960,29.1 976,29.6 992,30.0 1008,30.5 1024,31.1 1040,31.7 1056,32.3 1072,33.0 1088,33.7 1104,34.4 1120,35.2 1136,36.1 1152,36.9 1168,37.8 1184,38.8 1195,39.5 1195,46.0 1184,45.3 1168,44.3 1152,43.3 1136,42.3 1120,41.4 1104,40.6 1088,39.7 1072,39.0 1056,38.2 1040,37.6 1024,36.9 1008,36.3 992,35.8 976,35.3 960,34.8 944,34.4 928,34.0 912,33.7 896,33.4 880,33.2 864,33.0 848,32.8 832,32.7 816,32.7 800,32.7 784,32.7 768,32.8 752,32.9 736,33.0 720,33.2 704,33.5 688,33.8 672,34.1 656,34.5 640,34.9 624,35.4 608,35.9 592,36.5 576,37.1 560,37.7 544,38.4 528,39.2 512,39.9 496,40.8 480,41.6 464,42.6 448,43.5 432,44.5 416,45.6 400,46.7 384,47.8 368,49.0 352,50.2 336,51.5 320,52.8 304,54.2 288,55.6 272,57.0 256,58.5 240,60.0 224,61.6 208,63.3 192,64.9 176,66.6 160,68.4 144,70.2 128,72.1 112,73.9 96,75.9 80,77.9 64,79.9 48,82.0 32,84.1 16,86.2 0,88.4" fill="#929292"/>
<polygon points="0,97.1 16,95.0 32,92.9 48,90.9 64,88.9 80,87.0 96,85.1 112,83.2 128,81.4 144,79.7 160,77.9 176,76.3 192,74.6 208,73.0 224,71.5 240,70.0 256,68.5 272,67.1 288,65.7 304,64.3 320,63.0 336,61.8 352,60.6 368,59.4 384,58.3 400,57.2 416,56.1 432,55.1 448,54.2 464,53.3 480,52.4 496,51.6 512,50.8 528,50.0 544,49.3 560,48.7 576,48.0 592,47.5 608,46.9 624,46.4 640,46.0 656,45.6 672,45.2 688,44.9 704,44.6 720,44.4 736,44.2 752,44.0 768,43.9 784,43.8 800,43.8 816,43.8 832,43.9 848,44.0 864,44.1 880,44.3 887,44.4 887,50.5 880,50.3 864,50.1 848,50.0 832,49.9 816,49.8 800,49.8 784,49.8 768,49.9 752,50.0 736,50.2 720,50.4 704,50.7 688,51.0 672,51.3 656,51.7 640,52.2 624,52.7 608,53.2 592,53.8 576,54.4 560,55.1 544,55.8 528,56.6 512,57.4 496,58.3 480,59.2 464,60.1 448,61.1 432,62.2 416,63.3 400,64.4 384,65.6 368,66.8 352,68.1 336,69.4 320,70.8 304,72.2 288,73.7 272,75.2 256,76.7 240,78.3 224,80.0 208,81.7 192,83.4 176,85.2 160,87.0 144,88.9 128,90.8 112,92.8 96,94.8 80,96.9 64,99.0 48,101.2 32,103.4 16,105.6 0,107.9" fill="url(#grad2)"/>
<polygon points="887,44.4 903,44.6 919,44.9 935,45.3 951,45.6 967,46.1 983,46.5 999,47.0 1015,47.6 1031,48.1 1047,48.8 1063,49.4 1079,50.2 1095,50.9 1111,51.7 1127,52.6 1143,53.4 1159,54.4 1175,55.3 1191,56.3 1195,56.6 1195,63.8 1191,63.5 1175,62.4 1159,61.3 1143,60.3 1127,59.3 1111,58.4 1095,57.6 1079,56.7 1063,56.0 1047,55.2 1031,54.5 1015,53.9 999,53.3 983,52.8 967,52.3 951,51.8 935,51.4 919,51.0 903,50.7 887,50.5" fill="#a8a8a8"/>
<polygon points="0,119.4 16,117.2 32,115.0 48,112.9 64,110.8 80,108.7 96,106.8 112,104.8 128,102.9 144,101.1 160,99.2 176,97.5 192,95.8 208,94.1 224,92.4 240,90.9 256,89.3 272,87.8 288,86.4 304,84.9 320,83.6 336,82.3 352,81.0 368,79.8 384,78.6 400,77.4 416,76.3 432,75.3 448,74.3 464,73.3 480,72.4 496,71.5 512,70.7 528,69.9 544,69.1 560,68.5 576,67.8 592,67.2 608,66.6 624,66.1 640,65.6 656,65.2 672,64.8 688,64.5 704,64.2 720,63.9 736,63.7 752,63.6 768,63.5 784,63.4 800,63.4 816,63.4 832,63.4 848,63.5 864,63.7 880,63.9 896,64.1 912,64.4 928,64.7 944,65.1 960,65.5 976,66.0 992,66.5 1008,67.0 1024,67.6 1040,68.3 1056,69.0 1072,69.7 1088,70.5 1104,71.3 1120,72.2 1136,73.1 1152,74.0 1168,75.0 1184,76.1 1195,76.8 1195,82.2 1184,81.4 1168,80.3 1152,79.2 1136,78.2 1120,77.2 1104,76.3 1088,75.4 1072,74.6 1056,73.8 1040,73.1 1024,72.4 1008,71.8 992,71.2 976,70.7 960,70.2 944,69.7 928,69.3 912,69.0 896,68.7 880,68.4 864,68.2 848,68.0 832,67.9 816,67.9 800,67.9 784,67.9 768,68.0 752,68.1 736,68.3 720,68.5 704,68.7 688,69.1 672,69.4 656,69.8 640,70.3 624,70.8 608,71.3 592,71.9 576,72.6 560,73.3 544,74.0 528,74.8 512,75.6 496,76.5 480,77.5 464,78.4 448,79.5 432,80.5 416,81.7 400,82.8 384,84.0 368,85.3 352,86.6 336,88.0 320,89.4 304,90.8 288,92.3 272,93.9 256,95.5 240,97.1 224,98.8 208,100.6 192,102.3 176,104.2 160,106.1 144,108.0 128,110.0 112,112.0 96,114.1 80,116.2 64,118.3 48,120.6 32,122.8 16,125.1 0,127.5" fill="url(#grad3)"/>
<polygon points="0,138.8 16,136.5 32,134.3 48,132.1 64,129.9 80,127.8 96,125.7 112,123.7 128,121.7 144,119.8 160,117.9 176,116.0 192,114.2 208,112.5 224,110.8 240,109.1 256,107.5 272,106.0 288,104.5 304,103.0 320,101.6 336,100.2 352,98.9 368,97.6 384,96.3 400,95.2 416,94.0 432,92.9 436,92.6 436,97.3 432,97.6 416,98.8 400,100.0 384,101.2 368,102.5 352,103.9 336,105.3 320,106.7 304,108.2 288,109.8 272,111.4 256,113.0 240,114.7 224,116.5 208,118.3 192,120.1 176,122.0 160,123.9 144,125.9 128,128.0 112,130.1 96,132.2 80,134.4 64,136.6 48,138.9 32,141.2 16,143.6 0,146.1" fill="#b8b8b8"/>
<polygon points="436,92.6 452,91.6 468,90.6 484,89.7 496,89.0 496,93.5 484,94.2 468,95.2 452,96.2 436,97.3" fill="#ffffff"/>
<polygon points="496,89.0 512,88.1 528,87.3 544,86.5 560,85.8 576,85.1 592,84.5 608,83.9 624,83.4 640,82.9 656,82.4 672,82.0 688,81.7 704,81.4 720,81.1 736,80.9 752,80.7 768,80.6 784,80.5 800,80.5 816,80.5 832,80.6 848,80.7 864,80.8 880,81.1 896,81.3 912,81.6 928,81.9 944,82.3 960,82.8 976,83.2 992,83.8 1008,84.3 1024,85.0 1040,85.6 1056,86.4 1072,87.1 1088,87.9 1104,88.8 1120,89.7 1136,90.6 1152,91.6 1168,92.6 1184,93.7 1195,94.5 1195,99.3 1184,98.5 1168,97.3 1152,96.2 1136,95.2 1120,94.2 1104,93.2 1088,92.3 1072,91.5 1056,90.7 1040,89.9 1024,89.2 1008,88.6 992,88.0 976,87.4 960,86.9 944,86.4 928,86.0 912,85.7 896,85.3 880,85.1 864,84.9 848,84.7 832,84.6 816,84.5 800,84.5 784,84.5 768,84.6 752,84.7 736,84.9 720,85.1 704,85.4 688,85.7 672,86.1 656,86.5 640,87.0 624,87.5 608,88.1 592,88.7 576,89.4 560,90.1 544,90.9 528,91.7 512,92.5 496,93.5" fill="#c8c8c8"/>
<polygon points="0,160.1 16,157.7 32,155.4 48,153.1 64,150.8 80,148.6 96,146.5 112,144.4 128,142.3 144,140.3 160,138.3 176,136.4 192,134.5 208,132.7 224,131.0 240,129.2 256,127.6 272,125.9 288,124.4 304,122.8 320,121.4 336,119.9 352,118.5 368,117.2 384,115.9 400,114.7 416,113.5 432,112.4 448,111.3 464,110.2 480,109.2 496,108.3 512,107.4 528,106.5 544,105.7 560,105.0 576,104.3 592,103.6 608,103.0 624,102.4 640,101.9 656,101.5 672,101.0 688,100.7 704,100.4 720,100.1 736,99.9 752,99.7 768,99.6 784,99.5 800,99.5 816,99.5 832,99.5 848,99.6 864,99.8 880,100.0 896,100.3 912,100.6 928,100.9 944,101.4 960,101.8 976,102.3 992,102.9 1008,103.5 1024,104.1 1040,104.8 1056,105.5 1072,106.3 1088,107.2 1104,108.1 1120,109.0 1136,110.0 1152,111.0 1168,112.1 1184,113.2 1195,114.0 1195,118.2 1184,117.4 1168,116.2 1152,115.0 1136,114.0 1120,112.9 1104,112.0 1088,111.0 1072,110.1 1056,109.3 1040,108.5 1024,107.8 1008,107.1 992,106.5 976,105.9 960,105.4 944,104.9 928,104.5 912,104.1 896,103.8 880,103.6 864,103.3 848,103.2 832,103.0 816,103.0 800,103.0 784,103.0 768,103.1 752,103.2 736,103.4 720,103.6 704,103.9 688,104.2 672,104.6 656,105.1 640,105.5 624,106.1 608,106.7 592,107.3 576,108.0 560,108.7 544,109.5 528,110.4 512,111.2 496,112.2 480,113.2 464,114.2 448,115.3 432,116.5 416,117.7 400,118.9 384,120.2 368,121.5 352,122.9 336,124.4 320,125.9 304,127.4 288,129.0 272,130.7 256,132.4 240,134.1 224,135.9 208,137.8 192,139.7 176,141.6 160,143.6 144,145.7 128,147.8 112,149.9 96,152.1 80,154.4 64,156.7 48,159.1 32,161.5 16,163.9 0,166.4" fill="#d8d8d8"/>
<polygon points="0,182.8 16,180.3 32,177.8 48,175.4 64,173.1 80,170.8 96,168.5 112,166.3 128,164.2 144,162.1 160,160.0 176,158.0 192,156.1 208,154.2 224,152.3 240,150.5 256,148.8 272,147.1 288,145.4 304,143.8 320,142.3 336,140.8 352,139.4 368,138.0 384,136.6 400,135.3 416,134.1 432,132.9 448,131.8 464,130.7 480,129.6 496,128.6 512,127.7 528,126.8 544,126.0 560,125.2 576,124.4 592,123.7 608,123.1 624,122.5 640,122.0 656,121.5 672,121.1 688,120.7 704,120.3 720,120.1 736,119.8 752,119.6 768,119.5 784,119.4 800,119.4 816,119.4 832,119.5 848,119.6 864,119.8 880,120.0 896,120.3 912,120.6 928,121.0 944,121.4 960,121.9 976,122.4 992,123.0 1008,123.6 1024,124.3 1040,125.0 1056,125.8 1072,126.6 1088,127.5 1104,128.4 1120,129.4 1136,130.4 1152,131.5 1168,132.6 1184,133.8 1195,134.6 1195,137.6 1184,136.7 1168,135.5 1152,134.4 1136,133.3 1120,132.2 1104,131.2 1088,130.3 1072,129.4 1056,128.5 1040,127.7 1024,127.0 1008,126.3 992,125.6 976,125.1 960,124.5 944,124.0 928,123.6 912,123.2 896,122.9 880,122.6 864,122.4 848,122.2 832,122.1 816,122.0 800,122.0 784,122.0 768,122.1 752,122.3 736,122.4 720,122.7 704,123.0 688,123.3 672,123.7 656,124.2 640,124.7 624,125.2 608,125.8 592,126.5 576,127.2 560,127.9 544,128.7 528,129.6 512,130.5 496,131.5 480,132.5 464,133.5 448,134.7 432,135.8 416,137.1 400,138.3 384,139.7 368,141.0 352,142.5 336,143.9 320,145.5 304,147.1 288,148.7 272,150.4 256,152.1 240,153.9 224,155.7 208,157.6 192,159.6 176,161.6 160,163.6 144,165.7 128,167.9 112,170.1 96,172.4 80,174.7 64,177.0 48,179.4 32,181.9 16,184.4 0,187.0" fill="#e4e4e4"/>
<polygon points="0,203.7 16,201.2 32,198.7 48,196.2 64,193.8 80,191.5 96,189.2 112,187.0 128,184.8 144,182.7 160,180.6 176,178.6 192,176.6 208,174.6 224,172.8 240,170.9 256,169.2 272,167.4 288,165.8 304,164.2 320,162.6 336,161.1 352,159.6 368,158.2 384,156.8 400,155.5 416,154.2 432,153.0 448,151.9 464,150.8 480,149.7 496,148.7 512,147.7 528,146.8 544,146.0 560,145.2 576,144.4 592,143.7 608,143.1 624,142.5 640,142.0 656,141.5 672,141.0 688,140.6 704,140.3 720,140.0 736,139.8 752,139.6 768,139.4 784,139.4 800,139.3 816,139.3 832,139.4 848,139.5 864,139.7 880,139.9 896,140.2 912,140.5 928,140.9 944,141.3 960,141.8 976,142.4 992,142.9 1008,143.6 1024,144.3 1040,145.0 1056,145.8 1072,146.6 1088,147.5 1104,148.5 1120,149.4 1136,150.5 1152,151.6 1168,152.7 1184,153.9 1195,154.8 1195,157.7 1184,156.8 1168,155.6 1152,154.4 1136,153.3 1120,152.2 1104,151.2 1088,150.3 1072,149.3 1056,148.5 1040,147.7 1024,146.9 1008,146.2 992,145.6 976,145.0 960,144.4 944,143.9 928,143.5 912,143.1 896,142.8 880,142.5 864,142.3 848,142.1 832,142.0 816,141.9 800,141.9 784,141.9 768,142.0 752,142.1 736,142.3 720,142.6 704,142.9 688,143.2 672,143.6 656,144.1 640,144.6 624,145.1 608,145.7 592,146.4 576,147.1 560,147.9 544,148.7 528,149.6 512,150.5 496,151.5 480,152.5 464,153.6 448,154.7 432,155.9 416,157.1 400,158.4 384,159.8 368,161.2 352,162.6 336,164.1 320,165.7 304,167.3 288,169.0 272,170.7 256,172.4 240,174.2 224,176.1 208,178.0 192,180.0 176,182.0 160,184.1 144,186.3 128,188.4 112,190.7 96,193.0 80,195.3 64,197.7 48,200.1 32,202.6 16,205.2 0,207.8" fill="#e4e4e4"/>
<polygon points="0,225.4 16,222.8 32,220.3 48,217.8 64,215.4 80,213.0 96,210.7 112,208.4 128,206.2 144,204.1 160,201.9 176,199.9 192,197.9 208,195.9 224,194.0 240,192.1 256,190.3 272,188.6 288,186.9 304,185.3 320,183.7 336,182.1 352,180.6 368,179.2 384,177.8 400,176.5 416,175.2 432,174.0 448,172.8 464,171.7 480,170.6 496,169.6 512,168.6 528,167.7 544,166.8 560,166.0 576,165.2 592,164.5 608,163.9 624,163.3 640,162.7 656,162.2 672,161.8 688,161.4 704,161.0 720,160.7 736,160.5 752,160.3 768,160.2 784,160.1 800,160.1 816,160.1 832,160.1 848,160.3 864,160.4 880,160.7 896,160.9 912,161.3 928,161.7 944,162.1 960,162.6 976,163.1 992,163.7 1008,164.4 1024,165.1 1040,165.8 1056,166.6 1072,167.5 1088,168.4 1104,169.3 1120,170.3 1136,171.4 1152,172.5 1168,173.7 1184,174.9 1195,175.7 1195,178.6 1184,177.7 1168,176.5 1152,175.3 1136,174.1 1120,173.1 1104,172.0 1088,171.1 1072,170.1 1056,169.3 1040,168.4 1024,167.7 1008,167.0 992,166.3 976,165.7 960,165.1 944,164.6 928,164.2 912,163.8 896,163.5 880,163.2 864,162.9 848,162.8 832,162.6 816,162.6 800,162.6 784,162.6 768,162.7 752,162.8 736,163.0 720,163.2 704,163.5 688,163.9 672,164.3 656,164.8 640,165.3 624,165.8 608,166.5 592,167.1 576,167.9 560,168.6 544,169.5 528,170.4 512,171.3 496,172.3 480,173.3 464,174.4 448,175.6 432,176.8 416,178.0 400,179.4 384,180.7 368,182.1 352,183.6 336,185.1 320,186.7 304,188.3 288,190.0 272,191.8 256,193.5 240,195.4 224,197.3 208,199.2 192,201.2 176,203.3 160,205.4 144,207.6 128,209.8 112,212.1 96,214.4 80,216.7 64,219.2 48,221.7 32,224.2 16,226.8 0,229.4" fill="#e4e4e4"/>
<polygon points="0,247.8 16,245.2 32,242.6 48,240.1 64,237.7 80,235.2 96,232.9 112,230.6 128,228.3 144,226.1 160,224.0 176,221.9 192,219.9 208,217.9 224,215.9 240,214.1 256,212.2 272,210.5 288,208.7 304,207.1 320,205.4 336,203.9 352,202.4 368,200.9 384,199.5 400,198.1 416,196.8 432,195.6 448,194.4 464,193.3 480,192.2 496,191.1 512,190.2 528,189.2 544,188.3 560,187.5 576,186.7 592,186.0 608,185.4 624,184.7 640,184.2 656,183.7 672,183.2 688,182.8 704,182.5 720,182.2 736,181.9 752,181.7 768,181.6 784,181.5 800,181.5 816,181.5 832,181.6 848,181.7 864,181.9 880,182.1 896,182.4 912,182.7 928,183.1 944,183.6 960,184.1 976,184.6 992,185.2 1008,185.9 1024,186.6 1040,187.3 1056,188.1 1072,189.0 1088,189.9 1104,190.9 1120,191.9 1136,193.0 1152,194.1 1168,195.3 1184,196.5 1195,197.4 1195,200.2 1184,199.3 1168,198.1 1152,196.8 1136,195.7 1120,194.6 1104,193.5 1088,192.6 1072,191.6 1056,190.7 1040,189.9 1024,189.1 1008,188.4 992,187.7 976,187.1 960,186.6 944,186.1 928,185.6 912,185.2 896,184.9 880,184.6 864,184.3 848,184.1 832,184.0 816,183.9 800,183.9 784,184.0 768,184.0 752,184.2 736,184.4 720,184.6 704,184.9 688,185.3 672,185.7 656,186.2 640,186.7 624,187.3 608,187.9 592,188.6 576,189.3 560,190.1 544,190.9 528,191.8 512,192.8 496,193.8 480,194.9 464,196.0 448,197.1 432,198.4 416,199.6 400,201.0 384,202.3 368,203.8 352,205.3 336,206.8 320,208.4 304,210.1 288,211.8 272,213.5 256,215.4 240,217.2 224,219.2 208,221.1 192,223.2 176,225.2 160,227.4 144,229.6 128,231.8 112,234.1 96,236.5 80,238.9 64,241.4 48,243.9 32,246.4 16,249.1 0,251.7" fill="#e4e4e4"/>
<polygon points="0,270.6 16,268.0 32,265.4 48,262.8 64,260.3 80,257.9 96,255.5 112,253.1 128,250.9 144,248.6 160,246.4 176,244.3 192,242.2 208,240.2 224,238.3 240,236.4 256,234.5 272,232.7 288,231.0 304,229.3 320,227.6 336,226.0 352,224.5 368,223.0 384,221.6 400,220.2 416,218.9 432,217.6 448,216.4 464,215.3 480,214.2 496,213.1 512,212.1 528,211.2 544,210.3 560,209.4 576,208.6 592,207.9 608,207.2 624,206.6 640,206.0 656,205.5 672,205.1 688,204.7 704,204.3 720,204.0 736,203.8 752,203.6 768,203.4 784,203.3 800,203.3 816,203.3 832,203.4 848,203.5 864,203.7 880,203.9 896,204.2 912,204.6 928,205.0 944,205.4 960,205.9 976,206.5 992,207.1 1008,207.7 1024,208.5 1040,209.2 1056,210.1 1072,210.9 1088,211.9 1104,212.8 1120,213.9 1136,215.0 1152,216.1 1168,217.3 1184,218.6 1195,219.5 1195,222.2 1184,221.3 1168,220.0 1152,218.8 1136,217.6 1120,216.5 1104,215.5 1088,214.4 1072,213.5 1056,212.6 1040,211.8 1024,211.0 1008,210.2 992,209.6 976,208.9 960,208.4 944,207.9 928,207.4 912,207.0 896,206.6 880,206.4 864,206.1 848,205.9 832,205.8 816,205.7 800,205.7 784,205.7 768,205.8 752,206.0 736,206.2 720,206.4 704,206.7 688,207.1 672,207.5 656,208.0 640,208.5 624,209.1 608,209.7 592,210.4 576,211.2 560,212.0 544,212.8 528,213.7 512,214.7 496,215.7 480,216.8 464,217.9 448,219.1 432,220.3 416,221.6 400,223.0 384,224.4 368,225.8 352,227.4 336,228.9 320,230.5 304,232.2 288,233.9 272,235.7 256,237.6 240,239.5 224,241.4 208,243.4 192,245.5 176,247.6 160,249.8 144,252.0 128,254.3 112,256.6 96,259.0 80,261.4 64,263.9 48,266.5 32,269.1 16,271.8 0,274.5" fill="#e4e4e4"/>
<polygon points="0,294.1 16,291.4 32,288.8 48,286.2 64,283.7 80,281.2 96,278.8 112,276.4 128,274.1 144,271.8 160,269.6 176,267.4 192,265.3 208,263.3 224,261.3 240,259.4 256,257.5 272,255.7 288,253.9 304,252.2 320,250.5 336,248.9 352,247.3 368,245.8 384,244.4 400,243.0 416,241.6 432,240.4 448,239.1 464,238.0 480,236.8 496,235.8 512,234.8 528,233.8 544,232.9 560,232.0 576,231.2 592,230.5 608,229.8 624,229.2 640,228.6 656,228.1 672,227.6 688,227.2 704,226.8 720,226.5 736,226.3 752,226.1 768,225.9 784,225.9 800,225.8 816,225.8 832,225.9 848,226.0 864,226.2 880,226.5 896,226.8 912,227.1 928,227.5 944,228.0 960,228.5 976,229.0 992,229.7 1008,230.3 1024,231.1 1040,231.8 1056,232.7 1072,233.6 1088,234.5 1104,235.5 1120,236.6 1136,237.7 1152,238.8 1168,240.1 1184,241.3 1195,242.2 1195,244.9 1184,244.0 1168,242.7 1152,241.5 1136,240.3 1120,239.1 1104,238.1 1088,237.0 1072,236.1 1056,235.2 1040,234.3 1024,233.5 1008,232.8 992,232.1 976,231.5 960,230.9 944,230.4 928,229.9 912,229.5 896,229.1 880,228.8 864,228.6 848,228.4 832,228.3 816,228.2 800,228.2 784,228.2 768,228.3 752,228.4 736,228.6 720,228.9 704,229.2 688,229.6 672,230.0 656,230.5 640,231.0 624,231.6 608,232.3 592,233.0 576,233.7 560,234.5 544,235.4 528,236.3 512,237.3 496,238.3 480,239.4 464,240.6 448,241.8 432,243.0 416,244.3 400,245.7 384,247.1 368,248.6 352,250.1 336,251.7 320,253.4 304,255.1 288,256.8 272,258.6 256,260.5 240,262.4 224,264.4 208,266.4 192,268.5 176,270.7 160,272.9 144,275.1 128,277.4 112,279.8 96,282.2 80,284.7 64,287.2 48,289.8 32,292.4 16,295.1 0,297.9" fill="#e4e4e4"/>
<polygon points="0,318.4 16,315.7 32,313.0 48,310.4 64,307.8 80,305.3 96,302.8 112,300.4 128,298.1 144,295.8 160,293.5 176,291.4 192,289.2 208,287.2 224,285.1 240,283.2 256,281.3 272,279.4 288,277.6 304,275.9 320,274.2 336,272.5 352,271.0 368,269.4 384,268.0 400,266.6 416,265.2 432,263.9 448,262.6 464,261.5 480,260.3 496,259.2 512,258.2 528,257.2 544,256.3 560,255.5 576,254.7 592,253.9 608,253.2 624,252.6 640,252.0 656,251.4 672,251.0 688,250.5 704,250.2 720,249.9 736,249.6 752,249.4 768,249.3 784,249.2 800,249.2 816,249.2 832,249.2 848,249.4 864,249.6 880,249.8 896,250.1 912,250.5 928,250.9 944,251.3 960,251.8 976,252.4 992,253.0 1008,253.7 1024,254.5 1040,255.3 1056,256.1 1072,257.0 1088,258.0 1104,259.0 1120,260.0 1136,261.2 1152,262.3 1168,263.6 1184,264.9 1195,265.8 1195,268.4 1184,267.5 1168,266.2 1152,264.9 1136,263.7 1120,262.6 1104,261.5 1088,260.4 1072,259.5 1056,258.5 1040,257.7 1024,256.9 1008,256.1 992,255.4 976,254.8 960,254.2 944,253.7 928,253.2 912,252.8 896,252.4 880,252.1 864,251.9 848,251.7 832,251.5 816,251.5 800,251.5 784,251.5 768,251.6 752,251.7 736,251.9 720,252.2 704,252.5 688,252.9 672,253.3 656,253.8 640,254.3 624,254.9 608,255.6 592,256.3 576,257.1 560,257.9 544,258.8 528,259.7 512,260.7 496,261.7 480,262.8 464,264.0 448,265.2 432,266.5 416,267.8 400,269.2 384,270.6 368,272.1 352,273.7 336,275.3 320,277.0 304,278.7 288,280.5 272,282.3 256,284.2 240,286.2 224,288.2 208,290.2 192,292.3 176,294.5 160,296.7 144,299.0 128,301.4 112,303.8 96,306.2 80,308.7 64,311.3 48,313.9 32,316.6 16,319.3 0,322.1" fill="#d8d8d8"/>
<polygon points="0,344.1 16,341.4 32,338.6 48,336.0 64,333.4 80,330.8 96,328.3 112,325.9 128,323.5 144,321.2 160,318.9 176,316.7 192,314.5 208,312.4 224,310.4 240,308.4 256,306.4 272,304.6 288,302.7 304,301.0 320,299.3 336,297.6 352,296.0 368,294.5 384,293.0 400,291.5 416,290.2 432,288.8 448,287.6 464,286.4 480,285.2 496,284.1 512,283.1 528,282.1 544,281.1 560,280.3 576,279.5 592,278.7 608,278.0 624,277.3 640,276.7 656,276.2 672,275.7 688,275.3 704,274.9 720,274.6 736,274.4 752,274.1 768,274.0 784,273.9 800,273.9 816,273.9 832,274.0 848,274.1 864,274.3 880,274.5 896,274.8 912,275.2 928,275.6 944,276.1 960,276.6 976,277.2 992,277.8 1008,278.5 1024,279.3 1040,280.1 1056,280.9 1072,281.8 1088,282.8 1104,283.8 1120,284.9 1136,286.1 1152,287.3 1168,288.5 1184,289.8 1195,290.7 1195,293.3 1184,292.4 1168,291.0 1152,289.8 1136,288.5 1120,287.4 1104,286.3 1088,285.2 1072,284.2 1056,283.3 1040,282.4 1024,281.6 1008,280.9 992,280.1 976,279.5 960,278.9 944,278.4 928,277.9 912,277.5 896,277.1 880,276.8 864,276.6 848,276.4 832,276.2 816,276.1 800,276.1 784,276.2 768,276.3 752,276.4 736,276.6 720,276.9 704,277.2 688,277.6 672,278.0 656,278.5 640,279.0 624,279.7 608,280.3 592,281.0 576,281.8 560,282.6 544,283.5 528,284.5 512,285.5 496,286.6 480,287.7 464,288.8 448,290.1 432,291.4 416,292.7 400,294.1 384,295.6 368,297.1 352,298.7 336,300.3 320,302.0 304,303.7 288,305.5 272,307.4 256,309.3 240,311.3 224,313.3 208,315.4 192,317.6 176,319.8 160,322.0 144,324.3 128,326.7 112,329.1 96,331.6 80,334.2 64,336.8 48,339.4 32,342.1 16,344.9 0,347.7" fill="#d8d8d8"/>
<polygon points="0,369.5 16,366.7 32,364.0 48,361.3 64,358.6 80,356.0 96,353.5 112,351.0 128,348.6 144,346.3 160,344.0 176,341.7 192,339.5 208,337.4 224,335.3 240,333.3 256,331.3 272,329.4 288,327.6 304,325.8 320,324.0 336,322.4 352,320.7 368,319.2 384,317.7 400,316.2 416,314.8 432,313.5 448,312.2 464,311.0 480,309.8 496,308.7 512,307.6 528,306.6 544,305.7 560,304.8 576,304.0 592,303.2 608,302.5 624,301.8 640,301.2 656,300.7 672,300.2 688,299.7 704,299.4 720,299.0 736,298.8 752,298.6 768,298.4 784,298.3 800,298.3 816,298.3 832,298.4 848,298.5 864,298.7 880,299.0 896,299.3 912,299.6 928,300.1 944,300.5 960,301.1 976,301.7 992,302.3 1008,303.0 1024,303.8 1040,304.6 1056,305.4 1072,306.4 1088,307.4 1104,308.4 1120,309.5 1136,310.7 1152,311.9 1168,313.1 1184,314.5 1195,315.4 1195,317.9 1184,317.0 1168,315.6 1152,314.3 1136,313.1 1120,311.9 1104,310.8 1088,309.7 1072,308.7 1056,307.8 1040,306.9 1024,306.1 1008,305.3 992,304.6 976,303.9 960,303.3 944,302.8 928,302.3 912,301.9 896,301.5 880,301.2 864,300.9 848,300.7 832,300.6 816,300.5 800,300.5 784,300.5 768,300.6 752,300.8 736,301.0 720,301.3 704,301.6 688,302.0 672,302.4 656,302.9 640,303.5 624,304.1 608,304.7 592,305.5 576,306.3 560,307.1 544,308.0 528,309.0 512,310.0 496,311.1 480,312.2 464,313.4 448,314.6 432,315.9 416,317.3 400,318.7 384,320.2 368,321.8 352,323.3 336,325.0 320,326.7 304,328.5 288,330.3 272,332.2 256,334.1 240,336.1 224,338.2 208,340.3 192,342.5 176,344.7 160,347.0 144,349.4 128,351.8 112,354.2 96,356.7 80,359.3 64,362.0 48,364.6 32,367.4 16,370.2 0,373.1" fill="#d8d8d8"/>
<polygon points="0,396.5 16,393.6 32,390.8 48,388.1 64,385.4 80,382.8 96,380.2 112,377.7 128,375.2 144,372.8 160,370.5 176,368.2 192,366.0 208,363.8 224,361.7 240,359.7 256,357.7 272,355.8 288,353.9 304,352.1 320,350.3 336,348.6 352,347.0 368,345.4 384,343.8 400,342.4 416,341.0 432,339.6 448,338.3 464,337.1 480,335.9 496,334.7 512,333.7 528,332.7 544,331.7 560,330.8 576,330.0 592,329.2 608,328.5 624,327.8 640,327.2 656,326.6 672,326.1 688,325.7 704,325.3 720,325.0 736,324.7 752,324.5 768,324.4 784,324.3 800,324.2 816,324.2 832,324.3 848,324.5 864,324.7 880,324.9 896,325.2 912,325.6 928,326.0 944,326.5 960,327.0 976,327.6 992,328.3 1008,329.0 1024,329.8 1040,330.6 1056,331.5 1072,332.4 1088,333.4 1104,334.5 1120,335.6 1136,336.8 1152,338.0 1168,339.3 1184,340.6 1195,341.6 1195,344.0 1184,343.1 1168,341.7 1152,340.4 1136,339.1 1120,337.9 1104,336.8 1088,335.7 1072,334.7 1056,333.7 1040,332.8 1024,332.0 1008,331.2 992,330.5 976,329.8 960,329.2 944,328.7 928,328.2 912,327.8 896,327.4 880,327.1 864,326.8 848,326.6 832,326.5 816,326.4 800,326.4 784,326.4 768,326.5 752,326.7 736,326.9 720,327.1 704,327.5 688,327.9 672,328.3 656,328.8 640,329.4 624,330.0 608,330.7 592,331.4 576,332.2 560,333.1 544,334.0 528,335.0 512,336.0 496,337.1 480,338.2 464,339.4 448,340.7 432,342.0 416,343.4 400,344.8 384,346.3 368,347.9 352,349.5 336,351.2 320,352.9 304,354.7 288,356.6 272,358.5 256,360.5 240,362.5 224,364.6 208,366.7 192,368.9 176,371.2 160,373.5 144,375.9 128,378.3 112,380.8 96,383.4 80,386.0 64,388.6 48,391.4 32,394.1 16,397.0 0,399.9" fill="#d8d8d8"/>
<polygon points="0,424.2 16,421.3 32,418.4 48,415.7 64,412.9 80,410.3 96,407.7 112,405.1 128,402.7 144,400.2 160,397.9 176,395.6 192,393.3 208,391.1 224,389.0 240,386.9 256,384.9 272,382.9 288,381.0 304,379.2 320,377.4 336,375.7 352,374.0 368,372.4 384,370.8 400,369.3 416,367.9 432,366.5 448,365.2 464,364.0 480,362.8 496,361.6 512,360.5 528,359.5 544,358.5 560,357.6 576,356.8 592,356.0 608,355.2 624,354.6 640,353.9 656,353.4 672,352.9 688,352.4 704,352.0 720,351.7 736,351.4 752,351.2 768,351.1 784,351.0 800,351.0 816,351.0 832,351.1 848,351.2 864,351.4 880,351.6 896,352.0 912,352.3 928,352.8 944,353.2 960,353.8 976,354.4 992,355.1 1008,355.8 1024,356.6 1040,357.4 1056,358.3 1072,359.2 1088,360.3 1104,361.3 1120,362.5 1136,363.6 1152,364.9 1168,366.2 1184,367.6 1195,368.5 1195,370.9 1184,369.9 1168,368.6 1152,367.2 1136,366.0 1120,364.8 1104,363.6 1088,362.5 1072,361.5 1056,360.5 1040,359.6 1024,358.8 1008,358.0 992,357.2 976,356.6 960,355.9 944,355.4 928,354.9 912,354.5 896,354.1 880,353.8 864,353.5 848,353.3 832,353.2 816,353.1 800,353.1 784,353.1 768,353.2 752,353.3 736,353.6 720,353.8 704,354.2 688,354.6 672,355.0 656,355.5 640,356.1 624,356.7 608,357.4 592,358.2 576,359.0 560,359.8 544,360.8 528,361.7 512,362.8 496,363.9 480,365.1 464,366.3 448,367.6 432,368.9 416,370.3 400,371.8 384,373.3 368,374.9 352,376.5 336,378.2 320,379.9 304,381.8 288,383.6 272,385.6 256,387.6 240,389.6 224,391.7 208,393.9 192,396.1 176,398.4 160,400.8 144,403.2 128,405.6 112,408.2 96,410.8 80,413.4 64,416.1 48,418.9 32,421.7 16,424.6 0,427.5" fill="#d8d8d8"/>
<polygon points="0,453.3 16,450.3 32,447.5 48,444.6 64,441.9 80,439.2 96,436.6 112,434.0 128,431.5 144,429.0 160,426.6 176,424.3 192,422.0 208,419.8 224,417.6 240,415.5 256,413.5 272,411.5 288,409.5 304,407.7 320,405.9 336,404.1 352,402.4 368,400.8 384,399.2 400,397.7 416,396.3 432,394.9 448,393.5 464,392.3 480,391.0 496,389.9 512,388.8 528,387.7 544,386.8 560,385.8 576,385.0 592,384.2 608,383.4 624,382.7 640,382.1 656,381.5 672,381.0 688,380.6 704,380.2 720,379.9 736,379.6 752,379.4 768,379.2 784,379.1 800,379.1 816,379.1 832,379.2 848,379.3 864,379.5 880,379.8 896,380.1 912,380.5 928,380.9 944,381.4 960,382.0 976,382.6 992,383.2 1008,384.0 1024,384.8 1040,385.6 1056,386.5 1072,387.5 1088,388.5 1104,389.6 1120,390.7 1136,391.9 1152,393.2 1168,394.5 1184,395.9 1195,396.9 1195,399.2 1184,398.2 1168,396.8 1152,395.5 1136,394.2 1120,393.0 1104,391.8 1088,390.7 1072,389.7 1056,388.7 1040,387.8 1024,386.9 1008,386.1 992,385.4 976,384.7 960,384.1 944,383.5 928,383.0 912,382.5 896,382.2 880,381.8 864,381.6 848,381.4 832,381.2 816,381.1 800,381.1 784,381.2 768,381.3 752,381.4 736,381.6 720,381.9 704,382.3 688,382.6 672,383.1 656,383.6 640,384.2 624,384.8 608,385.5 592,386.3 576,387.1 560,388.0 544,388.9 528,389.9 512,391.0 496,392.1 480,393.3 464,394.5 448,395.8 432,397.2 416,398.6 400,400.1 384,401.6 368,403.2 352,404.9 336,406.6 320,408.4 304,410.2 288,412.1 272,414.1 256,416.1 240,418.2 224,420.3 208,422.5 192,424.8 176,427.1 160,429.5 144,431.9 128,434.4 112,437.0 96,439.6 80,442.3 64,445.0 48,447.8 32,450.6 16,453.6 0,456.5" fill="#d8d8d8"/>
<polygon points="0,483.2 16,480.2 32,477.3 48,474.4 64,471.6 80,468.9 96,466.2 112,463.6 128,461.1 144,458.6 160,456.2 176,453.8 192,451.5 208,449.2 224,447.0 240,444.9 256,442.8 272,440.8 288,438.9 304,437.0 320,435.1 336,433.4 352,431.7 368,430.0 384,428.4 400,426.9 416,425.4 432,424.0 448,422.6 464,421.4 480,420.1 496,418.9 512,417.8 528,416.8 544,415.8 560,414.8 576,414.0 592,413.2 608,412.4 624,411.7 640,411.1 656,410.5 672,410.0 688,409.5 704,409.1 720,408.8 736,408.5 752,408.3 768,408.1 784,408.0 800,408.0 816,408.0 832,408.1 848,408.2 864,408.4 880,408.7 896,409.0 912,409.4 928,409.9 944,410.4 960,410.9 976,411.5 992,412.2 1008,413.0 1024,413.8 1040,414.6 1056,415.5 1072,416.5 1088,417.6 1104,418.7 1120,419.8 1136,421.0 1152,422.3 1168,423.7 1184,425.1 1195,426.0 1195,428.3 1184,427.3 1168,425.9 1152,424.5 1136,423.2 1120,422.0 1104,420.8 1088,419.7 1072,418.7 1056,417.7 1040,416.7 1024,415.9 1008,415.0 992,414.3 976,413.6 960,413.0 944,412.4 928,411.9 912,411.4 896,411.0 880,410.7 864,410.5 848,410.3 832,410.1 816,410.0 800,410.0 784,410.0 768,410.1 752,410.3 736,410.5 720,410.8 704,411.1 688,411.5 672,412.0 656,412.5 640,413.1 624,413.8 608,414.5 592,415.2 576,416.1 560,417.0 544,417.9 528,418.9 512,420.0 496,421.1 480,422.3 464,423.6 448,424.9 432,426.3 416,427.7 400,429.2 384,430.7 368,432.4 352,434.0 336,435.8 320,437.6 304,439.4 288,441.4 272,443.4 256,445.4 240,447.5 224,449.7 208,451.9 192,454.2 176,456.5 160,458.9 144,461.4 128,463.9 112,466.5 96,469.2 80,471.9 64,474.7 48,477.5 32,480.4 16,483.4 0,486.4" fill="#d8d8d8"/>
</g>
<polyline points="0,11.1 16,9.3 32,7.6 48,5.9 64,4.2 80,2.5 96,0.9 112,-0.6 128,-2.2 144,-3.6 160,-5.1 176,-6.5 192,-7.9 208,-9.3 224,-10.6 240,-11.9 256,-13.1 272,-14.3 288,-15.5 304,-16.6 320,-17.7 336,-18.8 352,-19.8 368,-20.8 384,-21.8 400,-22.7 416,-23.6 432,-24.4 448,-25.2 464,-26.0 480,-26.7 496,-27.4 512,-28.1 528,-28.7 544,-29.3 560,-29.9 576,-30.4 592,-30.9 608,-31.4 624,-31.8 640,-32.2 656,-32.5 672,-32.8 688,-33.1 704,-33.3 720,-33.5 736,-33.7 752,-33.8 768,-33.9 784,-34.0 800,-34.0 816,-34.0 832,-33.9 848,-33.9 864,-33.7 880,-33.6 896,-33.4 912,-33.2 928,-32.9 944,-32.6 960,-32.3 976,-31.9 992,-31.5 1008,-31.0 1024,-30.5 1040,-30.0 1056,-29.5 1072,-28.9 1088,-28.3 1104,-27.6 1120,-26.9 1136,-26.2 1152,-25.4 1168,-24.6 1184,-23.8 1195,-23.2" fill="none" stroke="#000" stroke-opacity=".22" stroke-width="11.2" stroke-dasharray="5 7" filter="url(#bl2)"/>
<polyline points="0,30.2 16,28.3 32,26.5 48,24.7 64,23.0 80,21.3 96,19.6 112,17.9 128,16.3 144,14.8 160,13.3 176,11.8 192,10.3 208,8.9 224,7.5 240,6.2 256,4.9 272,3.6 288,2.4 304,1.2 320,0.1 336,-1.1 352,-2.1 368,-3.2 384,-4.2 400,-5.1 416,-6.1 432,-7.0 448,-7.8 464,-8.6 480,-9.4 496,-10.1 512,-10.8 528,-11.5 544,-12.1 560,-12.7 576,-13.3 592,-13.8 608,-14.2 624,-14.7 640,-15.1 656,-15.4 672,-15.8 688,-16.0 704,-16.3 720,-16.5 736,-16.7 752,-16.8 768,-16.9 784,-17.0 800,-17.0 816,-17.0 832,-16.9 848,-16.8 864,-16.7 880,-16.6 896,-16.4 912,-16.1 928,-15.8 944,-15.5 960,-15.2 976,-14.8 992,-14.4 1008,-13.9 1024,-13.4 1040,-12.8 1056,-12.3 1072,-11.6 1088,-11.0 1104,-10.3 1120,-9.6 1136,-8.8 1152,-8.0 1168,-7.2 1184,-6.3 1195,-5.7" fill="none" stroke="#000" stroke-opacity=".22" stroke-width="11.2" stroke-dasharray="5 7" filter="url(#bl2)"/>
<polyline points="0,48.8 16,46.9 32,45.0 48,43.1 64,41.3 80,39.5 96,37.7 112,36.0 128,34.3 144,32.7 160,31.1 176,29.6 192,28.0 208,26.6 224,25.1 240,23.7 256,22.4 272,21.0 288,19.8 304,18.5 320,17.3 336,16.2 352,15.0 368,13.9 384,12.9 400,11.9 416,10.9 432,10.0 448,9.1 464,8.3 480,7.5 496,6.7 512,6.0 528,5.3 544,4.6 560,4.0 576,3.4 592,2.9 608,2.4 624,1.9 640,1.5 656,1.1 672,0.8 688,0.5 704,0.2 720,0.0 736,-0.2 752,-0.3 768,-0.4 784,-0.5 800,-0.5 816,-0.5 832,-0.4 848,-0.3 864,-0.2 880,-0.0 896,0.2 912,0.4 928,0.7 944,1.0 960,1.4 976,1.8 992,2.3 1008,2.8 1024,3.3 1040,3.8 1056,4.4 1072,5.1 1088,5.8 1104,6.5 1120,7.3 1136,8.1 1152,8.9 1168,9.8 1184,10.7 1195,11.3" fill="none" stroke="#000" stroke-opacity=".22" stroke-width="9.6" stroke-dasharray="5 7" filter="url(#bl2)"/>
<polyline points="0,83.5 16,81.4 32,79.3 48,77.3 64,75.3 80,73.3 96,71.4 112,69.6 128,67.7 144,66.0 160,64.2 176,62.5 192,60.9 208,59.3 224,57.7 240,56.2 256,54.7 272,53.3 288,51.9 304,50.6 320,49.3 336,48.0 352,46.8 368,45.6 384,44.5 400,43.4 416,42.3 432,41.3 448,40.3 464,39.4 480,38.5 496,37.7 512,36.9 528,36.2 544,35.4 560,34.8 576,34.2 592,33.6 608,33.0 624,32.5 640,32.1 656,31.7 672,31.3 688,31.0 704,30.7 720,30.5 736,30.3 752,30.1 768,30.0 784,29.9 800,29.9 816,29.9 832,30.0 848,30.1 864,30.2 880,30.4 896,30.6 912,30.9 928,31.2 944,31.6 960,32.0 976,32.4 992,32.9 1008,33.4 1024,34.0 1040,34.6 1056,35.3 1072,36.0 1088,36.7 1104,37.5 1120,38.3 1136,39.2 1152,40.1 1168,41.1 1184,42.1 1195,42.8" fill="none" stroke="#000" stroke-opacity=".22" stroke-width="8.8" stroke-dasharray="5 7" filter="url(#bl2)"/>
<polyline points="0,123.4 16,121.1 32,118.9 48,116.7 64,114.6 80,112.5 96,110.4 112,108.4 128,106.4 144,104.5 160,102.7 176,100.8 192,99.1 208,97.3 224,95.6 240,94.0 256,92.4 272,90.9 288,89.4 304,87.9 320,86.5 336,85.1 352,83.8 368,82.5 384,81.3 400,80.1 416,79.0 432,77.9 448,76.9 464,75.9 480,74.9 496,74.0 512,73.2 528,72.3 544,71.6 560,70.9 576,70.2 592,69.6 608,69.0 624,68.4 640,68.0 656,67.5 672,67.1 688,66.8 704,66.5 720,66.2 736,66.0 752,65.8 768,65.7 784,65.6 800,65.6 816,65.6 832,65.7 848,65.8 864,65.9 880,66.1 896,66.4 912,66.7 928,67.0 944,67.4 960,67.8 976,68.3 992,68.8 1008,69.4 1024,70.0 1040,70.7 1056,71.4 1072,72.2 1088,73.0 1104,73.8 1120,74.7 1136,75.6 1152,76.6 1168,77.6 1184,78.7 1195,79.5" fill="none" stroke="#000" stroke-opacity=".22" stroke-width="7.2" stroke-dasharray="5 7" filter="url(#bl2)"/>
<g filter="url(#bl)">
<ellipse cx="517" cy="72.9" rx="3.5" ry="1.5" fill="#f4f4f4"/>
<ellipse cx="587" cy="86.8" rx="3.0" ry="1.5" fill="#f4f4f4"/>
<ellipse cx="965" cy="103.8" rx="3.8" ry="1.5" fill="#f4f4f4"/>
<ellipse cx="617" cy="104.5" rx="3.1" ry="1.5" fill="#f4f4f4"/>
<ellipse cx="1109" cy="171.0" rx="3.6" ry="1.5" fill="#f4f4f4"/>
<ellipse cx="949" cy="184.9" rx="3.1" ry="1.5" fill="#f4f4f4"/>
<ellipse cx="834" cy="204.6" rx="3.6" ry="1.5" fill="#f4f4f4"/>
<ellipse cx="744" cy="227.4" rx="2.6" ry="1.5" fill="#f4f4f4"/>
<ellipse cx="414" cy="243.1" rx="3.7" ry="1.5" fill="#f4f4f4"/>
<ellipse cx="63" cy="335.3" rx="4.4" ry="1.5" fill="#f4f4f4"/>
<ellipse cx="221" cy="419.3" rx="4.3" ry="1.5" fill="#f4f4f4"/>
<ellipse cx="498" cy="390.9" rx="2.9" ry="1.5" fill="#f4f4f4"/>
<ellipse cx="531" cy="360.4" rx="6" ry="2.2" fill="#fff"/><ellipse cx="551" cy="359.2" rx="6" ry="2.2" fill="#fff"/>
</g>
<rect x="284" y="218" width="1" height="1" fill="#e0e0e0"/>
<rect x="442" y="242" width="1" height="1" fill="#e0e0e0"/>
<rect x="748" y="26" width="1" height="1" fill="#e0e0e0"/>
<rect x="16" y="336" width="1" height="1" fill="#e0e0e0"/>
<rect x="310" y="94" width="1" height="1" fill="#e0e0e0"/>
<rect x="1190" y="189" width="1" height="1" fill="#e0e0e0"/>
<rect x="1000" y="191" width="1" height="1" fill="#e0e0e0"/>
<rect x="764" y="60" width="1" height="1" fill="#e0e0e0"/>
<rect x="759" y="348" width="1" height="1" fill="#e0e0e0"/>
<rect x="625" y="297" width="1" height="1" fill="#e0e0e0"/>
<rect x="802" y="26" width="1" height="1" fill="#e0e0e0"/>
<rect x="906" y="237" width="1" height="1" fill="#e0e0e0"/>
<rect x="360" y="12" width="1" height="1" fill="#e0e0e0"/>
<rect x="1034" y="190" width="1" height="1" fill="#e0e0e0"/>
<rect x="859" y="352" width="1" height="1" fill="#e0e0e0"/>
<rect x="853" y="369" width="1" height="1" fill="#e0e0e0"/>
<rect x="472" y="321" width="1" height="1" fill="#e0e0e0"/>
<rect x="531" y="375" width="1" height="1" fill="#e0e0e0"/>
<rect x="1050" y="39" width="1" height="1" fill="#e0e0e0"/>
<rect x="162" y="87" width="1" height="1" fill="#e0e0e0"/>
<rect x="1154" y="175" width="1" height="1" fill="#e0e0e0"/>
<rect x="749" y="121" width="1" height="1" fill="#e0e0e0"/>
<rect x="606" y="155" width="1" height="1" fill="#e0e0e0"/>
<rect x="419" y="235" width="1" height="1" fill="#e0e0e0"/>
<rect x="698" y="363" width="1" height="1" fill="#e0e0e0"/>
<rect x="815" y="373" width="1" height="1" fill="#e0e0e0"/>
<rect x="1023" y="397" width="1" height="1" fill="#e0e0e0"/>
<rect x="802" y="65" width="1" height="1" fill="#e0e0e0"/>
<rect x="1028" y="387" width="1" height="1" fill="#e0e0e0"/>
<rect x="1081" y="228" width="1" height="1" fill="#e0e0e0"/>
<rect x="853" y="85" width="1" height="1" fill="#e0e0e0"/>
<rect x="994" y="230" width="1" height="1" fill="#e0e0e0"/>
<rect x="341" y="25" width="1" height="1" fill="#e0e0e0"/>
<rect x="1020" y="397" width="1" height="1" fill="#e0e0e0"/>
<rect x="106" y="321" width="1" height="1" fill="#e0e0e0"/>
<rect x="491" y="60" width="1" height="1" fill="#e0e0e0"/>
<rect x="351" y="308" width="1" height="1" fill="#e0e0e0"/>
<rect x="1043" y="18" width="1" height="1" fill="#e0e0e0"/>
<rect x="734" y="18" width="1" height="1" fill="#e0e0e0"/>
<rect x="859" y="133" width="1" height="1" fill="#e0e0e0"/>
<rect x="1053" y="393" width="1" height="1" fill="#e0e0e0"/>
<rect x="604" y="400" width="1" height="1" fill="#e0e0e0"/>
<rect x="370" y="31" width="1" height="1" fill="#e0e0e0"/>
<rect x="717" y="13" width="1" height="1" fill="#e0e0e0"/>
<rect x="236" y="164" width="1" height="1" fill="#e0e0e0"/>
<rect x="730" y="63" width="1" height="1" fill="#e0e0e0"/>
<rect x="51" y="348" width="1" height="1" fill="#e0e0e0"/>
<rect x="375" y="384" width="1" height="1" fill="#e0e0e0"/>
<rect x="1072" y="151" width="1" height="1" fill="#e0e0e0"/>
<rect x="550" y="209" width="1" height="1" fill="#e0e0e0"/>
<rect x="769" y="239" width="1" height="1" fill="#e0e0e0"/>
<rect x="668" y="249" width="1" height="1" fill="#e0e0e0"/>
<rect x="1124" y="203" width="1" height="1" fill="#e0e0e0"/>
<rect x="515" y="289" width="1" height="1" fill="#e0e0e0"/>
<rect x="284" y="121" width="1" height="1" fill="#e0e0e0"/>
<rect x="1168" y="209" width="1" height="1" fill="#e0e0e0"/>
<rect x="655" y="5" width="1" height="1" fill="#e0e0e0"/>
<rect x="496" y="233" width="1" height="1" fill="#e0e0e0"/>
<rect x="24" y="247" width="1" height="1" fill="#e0e0e0"/>
<rect x="755" y="24" width="1" height="1" fill="#e0e0e0"/>
<rect x="750" y="187" width="1" height="1" fill="#e0e0e0"/>
<rect x="812" y="141" width="1" height="1" fill="#e0e0e0"/>
<rect x="845" y="296" width="1" height="1" fill="#e0e0e0"/>
<rect x="27" y="24" width="1" height="1" fill="#e0e0e0"/>
<rect x="808" y="386" width="1" height="1" fill="#e0e0e0"/>
<rect x="300" y="183" width="1" height="1" fill="#e0e0e0"/>
<rect x="708" y="128" width="1" height="1" fill="#e0e0e0"/>
<rect x="435" y="125" width="1" height="1" fill="#e0e0e0"/>
<rect x="441" y="239" width="1" height="1" fill="#e0e0e0"/>
<rect x="359" y="151" width="1" height="1" fill="#e0e0e0"/>
<rect x="923" y="11" width="1" height="1" fill="#e0e0e0"/>
<rect x="680" y="295" width="1" height="1" fill="#e0e0e0"/>
<rect x="370" y="89" width="1" height="1" fill="#e0e0e0"/>
<rect x="961" y="96" width="1" height="1" fill="#e0e0e0"/>
<rect x="224" y="175" width="1" height="1" fill="#e0e0e0"/>
<rect x="834" y="41" width="1" height="1" fill="#e0e0e0"/>
<rect x="385" y="134" width="1" height="1" fill="#e0e0e0"/>
<rect x="996" y="176" width="1" height="1" fill="#e0e0e0"/>
<rect x="1022" y="68" width="1" height="1" fill="#e0e0e0"/>
<rect x="402" y="261" width="1" height="1" fill="#e0e0e0"/>
<rect x="1057" y="181" width="1" height="1" fill="#e0e0e0"/>
<rect x="269" y="48" width="1" height="1" fill="#e0e0e0"/>
<rect x="633" y="77" width="1" height="1" fill="#e0e0e0"/>
<rect x="964" y="336" width="1" height="1" fill="#e0e0e0"/>
<rect x="219" y="112" width="1" height="1" fill="#e0e0e0"/>
<rect x="965" y="257" width="1" height="1" fill="#e0e0e0"/>
<rect x="963" y="138" width="1" height="1" fill="#e0e0e0"/>
<rect x="155" y="117" width="1" height="1" fill="#e0e0e0"/>
<rect x="949" y="109" width="1" height="1" fill="#e0e0e0"/>
<rect x="414" y="167" width="1" height="1" fill="#e0e0e0"/>
<rect x="502" y="164" width="1" height="1" fill="#e0e0e0"/>
<rect x="1100" y="63" width="1" height="1" fill="#e0e0e0"/>
<rect x="6" y="378" width="1" height="1" fill="#e0e0e0"/>
<rect x="1052" y="396" width="1" height="1" fill="#e0e0e0"/>
<rect x="519" y="381" width="1" height="1" fill="#e0e0e0"/>
<rect x="1108" y="89" width="1" height="1" fill="#e0e0e0"/>
<rect x="891" y="336" width="1" height="1" fill="#e0e0e0"/>
<rect x="792" y="208" width="1" height="1" fill="#e0e0e0"/>
<rect x="345" y="137" width="1" height="1" fill="#e0e0e0"/>
<rect x="272" y="27" width="1" height="1" fill="#e0e0e0"/>
<rect x="703" y="115" width="1" height="1" fill="#e0e0e0"/>
<rect x="968" y="18" width="1" height="1" fill="#e0e0e0"/>
<rect x="1080" y="278" width="1" height="1" fill="#e0e0e0"/>
<rect x="1104" y="360" width="1" height="1" fill="#e0e0e0"/>
<rect x="1075" y="231" width="1" height="1" fill="#e0e0e0"/>
<rect x="16" y="299" width="1" height="1" fill="#e0e0e0"/>
<rect x="205" y="120" width="1" height="1" fill="#e0e0e0"/>
<rect x="792" y="211" width="1" height="1" fill="#e0e0e0"/>
<rect x="494" y="377" width="1" height="1" fill="#e0e0e0"/>
<rect x="732" y="137" width="1" height="1" fill="#e0e0e0"/>
</svg>
<div class="a" style="left:1859px;top:600px;width:17px;height:401px;background:#f0f0f0"></div>
<div class="a" style="left:1864px;top:605px;border-left:4px solid transparent;border-right:4px solid transparent;border-bottom:4px solid #555"></div>
<div class="a" style="left:1860px;top:668px;width:15px;height:130px;border:1px solid #a8a8a8;border-radius:2px;background:linear-gradient(90deg,#f4f4f4,#dadada)"></div>
<div class="a" style="left:1864px;top:729px;width:7px;height:6px;border-top:1px solid #777;border-bottom:1px solid #777"></div>
<div class="a" style="left:1864px;top:992px;border-left:4px solid transparent;border-right:4px solid transparent;border-top:4px solid #555"></div>
<div class="a" style="left:664px;top:1001px;width:1212px;height:18px;background:#f0f0f0"></div>
<div class="a" style="left:740px;top:1002px;width:951px;height:15px;border:1px solid #a8a8a8;border-radius:2px;background:linear-gradient(#f4f4f4,#dadada)"></div>
<div class="a" style="left:1186px;top:1006px;width:6px;height:7px;border-left:1px solid #777;border-right:1px solid #777"></div>
<div class="a" style="left:1850px;top:1005px;border-top:4px solid transparent;border-bottom:4px solid transparent;border-left:4px solid #333"></div>
<div class="a" style="left:664px;top:1019px;width:1212px;height:15px;background:#f0f0f0;border-top:1px solid #9a9a9a;overflow:hidden">
<div class="a" style="left:173px;top:2px;width:1px;height:14px;background:#a8a8a8"></div><div class="a" style="left:249px;top:2px;width:1px;height:14px;background:#a8a8a8"></div><div class="a" style="left:298px;top:2px;width:1px;height:14px;background:#a8a8a8"></div><div class="a" style="left:348px;top:2px;width:1px;height:14px;background:#a8a8a8"></div><div class="a" style="left:426px;top:2px;width:1px;height:14px;background:#a8a8a8"></div><div class="a" style="left:537px;top:2px;width:1px;height:14px;background:#a8a8a8"></div><div class="a" style="left:628px;top:2px;width:1px;height:14px;background:#a8a8a8"></div><div class="a" style="left:726px;top:2px;width:1px;height:14px;background:#a8a8a8"></div><div class="a" style="left:841px;top:2px;width:1px;height:14px;background:#a8a8a8"></div><div class="a" style="left:966px;top:2px;width:1px;height:14px;background:#a8a8a8"></div><span class="t" style="left:177px;top:7px;font-size:11px">03m 00s</span><span class="t" style="left:253px;top:7px;font-size:11px">Bin:2x2</span><span class="t" style="left:307px;top:7px;font-size:11px">-5.0°C</span><span class="t" style="left:353px;top:7px;font-size:11px">MX=0 MY=0</span><span class="t" style="left:432px;top:7px;font-size:11px">Filt.=</span><span class="t" style="left:541px;top:7px;font-size:11px">Foc=1797.0 mm</span><span class="t" style="left:632px;top:7px;font-size:11px">sca=1.04 "/pixel</span><span class="t" style="left:730px;top:7px;font-size:11px">RA=19h24m31.367s</span><span class="t" style="left:845px;top:7px;font-size:11px">DEC=+50°10'08.81''</span></div>

<!-- MDI SCROLLBARS -->
<div class="a" style="left:1901px;top:73px;width:18px;height:961px;background:#f0f0f0;border-left:1px solid #e0e0e0"></div>
<div class="a" style="left:1902px;top:76px;width:15px;height:15px;border:1px solid #b8b8b8;border-radius:2px;background:linear-gradient(90deg,#f8f8f8,#e0e0e0)"></div>
<div class="a" style="left:1906px;top:81px;border-left:4px solid transparent;border-right:4px solid transparent;border-bottom:4px solid #555"></div>
<div class="a" style="left:1902px;top:99px;width:15px;height:885px;border:1px solid #a8a8a8;border-radius:2px;background:linear-gradient(90deg,#f4f4f4,#dadada)"></div>
<div class="a" style="left:1906px;top:538px;width:7px;height:6px;border-top:1px solid #777;border-bottom:1px solid #777"></div>
<div class="a" style="left:1902px;top:1016px;width:15px;height:15px;border:1px solid #3c7fb1;border-radius:2px;background:linear-gradient(#e4f4fd,#a8d8f8)"></div>
<div class="a" style="left:1906px;top:1022px;border-left:4px solid transparent;border-right:4px solid transparent;border-top:4px solid #2a5a8a"></div>
<div class="a" style="left:2px;top:1034px;width:1917px;height:18px;background:#f0f0f0"></div>
<div class="a" style="left:8px;top:1039px;border-top:4px solid transparent;border-bottom:4px solid transparent;border-right:4px solid #333"></div>
<div class="a" style="left:20px;top:1035px;width:1847px;height:15px;border:1px solid #a8a8a8;border-radius:2px;background:linear-gradient(#f4f4f4,#dadada)"></div>
<div class="a" style="left:939px;top:1039px;width:6px;height:7px;border-left:1px solid #777;border-right:1px solid #777"></div>
<div class="a" style="left:1890px;top:1039px;border-top:4px solid transparent;border-bottom:4px solid transparent;border-left:4px solid #333"></div>

<!-- DOME -->
<div class="a" style="left:283px;top:713px;width:537px;height:333px;border:1px solid #3e4650;background:linear-gradient(90deg,#eef5fb,#e4eff8 60%,#eaf2f9);box-shadow:1px 2px 5px rgba(0,0,0,.22)"></div>
<div class="a" style="left:284px;top:714px;width:535px;height:22px;background:linear-gradient(90deg,rgba(0,0,0,0) 0,rgba(0,0,0,0) 368px,rgba(40,44,50,.7) 382px,#3a3f46 400px,#2e3238 100%)"></div>
<div class="a" style="left:815px;top:736px;width:4px;height:265px;background:#30343a"></div>

<span class="wt" style="left:290px;top:719px;font-size:11.5px;color:#101820">Contrôle Dome</span>
<div class="a" style="left:798px;top:717px;width:16px;height:16px;border:1px solid #8a9098;border-radius:2px;background:linear-gradient(#6a7078,#3a4048);color:#fff;font-size:10px;text-align:center;line-height:14px;font-weight:bold"><svg class="a" style="left:0;top:0" width="14" height="14"><path d="M4.5 4.5l5 5M9.5 4.5l-5 5" stroke="#fff" stroke-width="1.6"/></svg></div>
<div class="a" style="left:288px;top:736px;width:527px;height:306px;background:#f0f0f0;border:1px solid #404850"></div>
<div class="a" style="left:290px;top:738px;width:228px;height:254px;background:#f0f0f0;border-right:1px solid #fff;border-bottom:1px solid #fff"></div>
<div class="a" style="left:520px;top:738px;width:294px;height:254px;border-left:1px solid #d4d4d4"></div>
<div class="a" style="left:293px;top:763px;width:225px;height:225px;background:#fff;border:1px solid #000"></div>
<svg class="a" style="left:293px;top:763px" width="225" height="225" viewBox="293 763 225 225">
 <circle cx="405" cy="875" r="100" fill="none" stroke="#000" stroke-width="1"/>
 <line x1="405.5" y1="773" x2="405.5" y2="975" stroke="#000"/>
 <line x1="304" y1="875.5" x2="506" y2="875.5" stroke="#000"/>
 <line x1="322.5" y1="818.5" x2="405.4" y2="850.5" stroke="#000"/>
 <line x1="310" y1="841" x2="405" y2="875" stroke="#000"/>
 <line x1="305.6" y1="865" x2="396.7" y2="898.5" stroke="#000"/>
 <line x1="308" y1="849" x2="405.4" y2="875" stroke="#d02020"/>
 <circle cx="405" cy="875" r="25" fill="none" stroke="#000"/>
 <line x1="409.5" y1="850.5" x2="396.7" y2="898.5" stroke="#000"/>
 <ellipse cx="353" cy="860" rx="13" ry="14" fill="none" stroke="#d02020"/>
 <rect x="398" y="767" width="14" height="13" fill="#fff" stroke="#000"/><text x="400.5" y="778" font-size="11" font-family="Liberation Sans">N</text>
 <rect x="398" y="969" width="14" height="13" fill="#fff" stroke="#000"/><text x="401" y="980" font-size="11" font-family="Liberation Sans">S</text>
 <rect x="297" y="868" width="15" height="13" fill="#fff" stroke="#000"/><text x="298.5" y="879" font-size="11" font-family="Liberation Sans">W</text>
 <rect x="499" y="868" width="14" height="13" fill="#fff" stroke="#000"/><text x="502" y="879" font-size="11" font-family="Liberation Sans">E</text>
</svg>
<div class="a" style="left:524px;top:748px;width:134px;height:16px;border:1px solid #fff;box-shadow:inset 1px 1px 0 #a0a0a0"></div><span class="t" style="left:528px;top:751px;font-size:11px">Position courante / Dome</span><div class="a" style="left:665px;top:748px;width:54px;height:16px;border:1px solid #fff;box-shadow:inset 1px 1px 0 #a0a0a0;font-size:11px;text-align:right;padding-right:12px;line-height:14px">290.2</div><div class="a" style="left:721px;top:748px;width:7px;height:16px;border:1px solid #fff;box-shadow:inset 1px 1px 0 #a0a0a0;font-size:10px;line-height:9px;padding-left:1px;color:#000">°</div><div class="a" style="left:524px;top:768px;width:134px;height:16px;border:1px solid #fff;box-shadow:inset 1px 1px 0 #a0a0a0"></div><span class="t" style="left:528px;top:771px;font-size:11px">Position courante / Telesc</span><div class="a" style="left:665px;top:768px;width:54px;height:16px;border:1px solid #fff;box-shadow:inset 1px 1px 0 #a0a0a0;font-size:11px;text-align:right;padding-right:12px;line-height:14px">285.5</div><div class="a" style="left:721px;top:768px;width:7px;height:16px;border:1px solid #fff;box-shadow:inset 1px 1px 0 #a0a0a0;font-size:10px;line-height:9px;padding-left:1px;color:#000">°</div><div class="a" style="left:524px;top:786px;width:134px;height:16px;border:1px solid #fff;box-shadow:inset 1px 1px 0 #a0a0a0"></div><span class="t" style="left:528px;top:789px;font-size:11px">Diff d'Azimut géometrique</span><div class="a" style="left:665px;top:786px;width:54px;height:16px;border:1px solid #fff;box-shadow:inset 1px 1px 0 #a0a0a0;font-size:11px;text-align:right;padding-right:12px;line-height:14px">-4.7</div><div class="a" style="left:721px;top:786px;width:7px;height:16px;border:1px solid #fff;box-shadow:inset 1px 1px 0 #a0a0a0;font-size:10px;line-height:9px;padding-left:1px;color:#000">°</div><div class="a" style="left:524px;top:804px;width:134px;height:16px;border:1px solid #fff;box-shadow:inset 1px 1px 0 #a0a0a0"></div><span class="t" style="left:528px;top:807px;font-size:11px">Azimut Télescope</span><div class="a" style="left:665px;top:804px;width:54px;height:16px;border:1px solid #fff;box-shadow:inset 1px 1px 0 #a0a0a0;font-size:11px;text-align:right;padding-right:12px;line-height:14px">296.7</div><div class="a" style="left:721px;top:804px;width:7px;height:16px;border:1px solid #fff;box-shadow:inset 1px 1px 0 #a0a0a0;font-size:10px;line-height:9px;padding-left:1px;color:#000">°</div><div class="a" style="left:524px;top:827px;width:136px;height:16px;border:1px solid #fff;box-shadow:inset 1px 1px 0 #a0a0a0"></div><span class="t" style="left:528px;top:830px;font-size:11px">Nelle Position (/Abs. dome)</span><div class="edit" style="left:665px;top:826px;width:54px;height:19px;line-height:17px;border-color:#e0e0e0">0</div><div class="a" style="left:721px;top:826px;width:7px;height:16px;border:1px solid #fff;box-shadow:inset 1px 1px 0 #a0a0a0;font-size:10px;line-height:9px;padding-left:1px;color:#000">°</div><div class="a" style="left:787px;top:744px;width:22px;height:23px;border:1px solid #a8a8a8;border-radius:3px;background:linear-gradient(#fdfdfd,#e8e8e8)"><svg width="20" height="21"><path d="M10 3 L10 12 M5 9 L10 14 L15 9" stroke="#e00" stroke-width="3" fill="none"/><rect x="4" y="15" width="12" height="2.5" fill="#e00"/></svg></div><div class="btn" style="left:735px;top:780px;width:69px;height:18px;line-height:16px">Init / Reset</div><div class="btn" style="left:735px;top:803px;width:69px;height:18px;line-height:16px;border-color:#3c7fb1;box-shadow:inset 0 0 0 1px #8fd0f2;background:linear-gradient(#eaf6fd,#d9f0fc 50%,#bee6fd 50%,#a7d9f5)">Aligner au tel.</div><div class="btn" style="left:735px;top:826px;width:69px;height:18px;line-height:16px">Appliquer</div><div class="a" style="left:523px;top:857px;width:281px;height:34px;border:1px solid #fff;box-shadow:inset 1px 1px 0 #d0d0d0"></div><span class="t" style="left:531px;top:852px;font-size:11px;background:#f0f0f0;padding:0 1px">Parking</span><div class="btn" style="left:527px;top:866px;width:47px;height:19px;line-height:17px">Nord</div><div class="btn" style="left:576px;top:866px;width:42px;height:19px;line-height:17px">Sud</div><div class="btn" style="left:619px;top:866px;width:39px;height:19px;line-height:17px">Est</div><div class="btn" style="left:659px;top:866px;width:47px;height:19px;line-height:17px">Ouest</div><div class="btn" style="left:707px;top:866px;width:47px;height:19px;line-height:17px">Utilis.</div><div class="edit" style="left:757px;top:865px;width:32px;height:20px;line-height:18px;border-color:#e0e0e0">0</div><div class="a" style="left:791px;top:866px;width:7px;height:17px;border:1px solid #fff;box-shadow:inset 1px 1px 0 #a0a0a0;font-size:10px;line-height:9px;padding-left:1px;color:#000">°</div><div class="a" style="left:523px;top:899px;width:281px;height:89px;border:1px solid #fff;box-shadow:inset 1px 1px 0 #d0d0d0"></div><span class="t" style="left:529px;top:893px;font-size:11px;background:#f0f0f0;padding:0 1px">Suivi Dome-Telescope</span><div class="chk" style="left:528px;top:908px;color:#243a8a;font-size:11px;line-height:11px;text-align:center"><svg class="a" style="left:1px;top:1px" width="11" height="11"><path d="M2.5 5.5l2.2 2.8L8.8 2.2" fill="none" stroke="#2a3a8c" stroke-width="1.7"/></svg></div><span class="t" style="left:543px;top:909px;font-size:11px">Activer suivi coupole sur déplacement sidéral telescope</span><span class="t" style="left:527px;top:928px;font-size:11px;color:#8a8a8a">Décalage azimutal max. (°) :</span><div class="edit" style="left:665px;top:923px;width:43px;height:20px;line-height:18px;color:#888;overflow:hidden;border-color:#ddd">4.99999</div><span class="t" style="left:735px;top:929px;font-size:11px">Activité</span><div class="a" style="left:777px;top:926px;width:27px;height:17px;border:1px solid #333;background:#f0f0f0"></div><span class="t" style="left:527px;top:950px;font-size:11px;color:#8a8a8a">Vérifier toute les (minutes) :</span><div class="edit" style="left:665px;top:945px;width:43px;height:21px;line-height:19px;color:#555;border-color:#ddd">1</div><svg class="a" style="left:690px;top:947px" width="14" height="17"><rect x="0.5" y="0.5" width="13" height="7.5" rx="2.5" fill="#f0f0f0" stroke="#555"/><rect x="0.5" y="8.5" width="13" height="7.5" rx="2.5" fill="#e8e8e8" stroke="#555"/><path d="M3 6.5h8L7 2.5z M3 10h8L7 14z" fill="#000"/></svg><span class="t" style="left:731px;top:950px;font-size:11px">03:15:48 (4.8°)</span><div class="chk" style="left:528px;top:970px;color:#243a8a;font-size:11px;line-height:11px;text-align:center"><svg class="a" style="left:1px;top:1px" width="11" height="11"><path d="M2.5 5.5l2.2 2.8L8.8 2.2" fill="none" stroke="#2a3a8c" stroke-width="1.7"/></svg></div><span class="t" style="left:543px;top:971px;font-size:11px">Déplacer le dome avec le télescope au pointage</span><div class="btnd" style="left:292px;top:998px;width:94px;height:19px;line-height:17px">Ouvrir Dome/Abri</div><div class="btn" style="left:391px;top:998px;width:92px;height:19px;line-height:17px">Fermer Dome/Abri</div><div class="btnd" style="left:489px;top:998px;width:88px;height:19px;line-height:17px;font-weight:bold">Arret Urgence</div><span class="t" style="left:584px;top:1002px;font-size:11px;color:#8a8a8a">Telescope parké</span><div class="a" style="left:670px;top:1000px;width:25px;height:14px;border:1px solid #333"></div><span class="t" style="left:703px;top:1002px;font-size:11px">Ferm. urgence</span><div class="a" style="left:777px;top:1000px;width:26px;height:14px;border:1px solid #333"></div><div class="a" style="left:290px;top:1021px;width:35px;height:19px;border:1px solid #fff;box-shadow:inset 1px 1px 0 #a0a0a0"></div><span class="t" style="left:294px;top:1025px;font-size:11px">Etat :</span><div class="a" style="left:328px;top:1021px;width:191px;height:19px;border:1px solid #fff;box-shadow:inset 1px 1px 0 #a0a0a0"></div><span class="t" style="left:333px;top:1024px;font-size:12px;font-weight:bold">En attente</span><div class="a" style="left:525px;top:1021px;width:224px;height:19px;border:1px solid #fff;box-shadow:inset 1px 1px 0 #a0a0a0"></div><span class="t" style="left:530px;top:1024px;font-size:12px;font-weight:bold">Coupole/Abri ouvert !</span><span class="t" style="left:750px;top:1026px;font-size:11px">Comm.</span><div class="a" style="left:785px;top:1026px;width:24px;height:13px;border:1px solid #333"></div>
<!-- GEMINI -->
<div class="tw" style="left:6px;top:327px;width:163px;height:457px;border-color:#7e8892;background:linear-gradient(90deg,#f8fbfe,#eaf4fb 60%,#f4f8fc)"></div>
<span class="wt" style="left:14px;top:334px;font-size:11.5px">Gemini</span>
<div class="cbtn" style="left:146px;top:332px;width:17px;height:16px"><svg class="a" style="left:3px;top:3px" width="9" height="9"><path d="M1.5 1.5l6 6M7.5 1.5l-6 6" stroke="#4a525a" stroke-width="3.2" stroke-linecap="round"/><path d="M1.5 1.5l6 6M7.5 1.5l-6 6" stroke="#fff" stroke-width="1.3" stroke-linecap="round"/></svg></div>
<div class="a" style="left:12px;top:351px;width:151px;height:427px;border:1px solid #3a3a3a;background:#fff"></div>
<div class="blk" style="left:14px;top:353px;width:147px;height:423px"></div>
<div class="a" style="left:26px;top:365px;width:126px;height:20px;background:#3a0202"></div>
<span class="t" style="left:32px;top:369px;font-size:11.5px;color:#7a3a3a">GUIDE</span>
<span class="t" style="left:123px;top:369px;font-size:11.5px;color:#7a3a3a">EST</span>
<span class="t" style="left:29px;top:389px;font-size:11px;color:#fff;line-height:16px">LST
RA
Dec
HA
To Limit</span>
<span class="t" style="left:103px;top:389px;font-size:11px;color:#e02020;line-height:16px">22:40:28
19:25:00
50:12:19
03:15:28
11:01:39</span>
<svg class="a" style="left:14px;top:470px" width="147" height="150" viewBox="14 470 147 150">
<defs><linearGradient id="dg" x1="0" y1="0" x2="1" y2="1"><stop offset="0" stop-color="#b8b48c"/><stop offset=".45" stop-color="#f6f5ef"/><stop offset="1" stop-color="#e4e2d0"/></linearGradient></defs>
<g id="dm">
<path d="M88 487 L117 516 L88 545 L59 516Z" fill="#4a4020"/>
<path d="M88 487 L116 515 L88 541 L60 514Z" fill="url(#dg)"/>
<path d="M60 514 L88 541 L88 545 L59 516Z" fill="#8a7e48"/>
</g>
<use href="#dm" transform="translate(-36,35)"/>
<use href="#dm" transform="translate(36,35)"/>
<use href="#dm" transform="translate(0,70)"/>
</svg>
<div class="chk" style="left:21px;top:624px;border-color:#999;background:linear-gradient(135deg,#ddd,#fff)"></div>
<span class="t" style="left:40px;top:617px;font-size:11px;color:#fff;line-height:13px">Inv
RA</span>
<span class="t" style="left:113px;top:617px;font-size:11px;color:#fff;line-height:13px;text-align:right">  Inv
Dec</span>
<div class="chk" style="left:141px;top:624px;color:#243a8a;font-size:11px;line-height:11px;text-align:center;background:linear-gradient(135deg,#ddd,#fff)"><svg class="a" style="left:1px;top:1px" width="11" height="11"><path d="M2.5 5.5l2.2 2.8L8.8 2.2" fill="none" stroke="#2a3a8c" stroke-width="1.7"/></svg></div>
<div class="a" style="left:21px;top:658px;width:134px;height:30px;border:2px solid #fff;border-radius:3px"></div>
<span class="t" style="left:28px;top:652px;font-size:11px;color:#fff;background:#000;padding:0 2px">Vitesse</span>
<div class="a" style="left:34px;top:669px;width:12px;height:12px;border-radius:50%;background:radial-gradient(circle,#2a8a9a 0,#1a6a80 2px,#ddd 3px,#fff 5px,#888 6px)"></div>
<span class="t" style="left:52px;top:670px;font-size:11px;color:#fff">G</span>
<div class="a" style="left:73px;top:669px;width:12px;height:12px;border-radius:50%;background:radial-gradient(circle,#fff 0,#ddd 4px,#aaa 6px)"></div>
<span class="t" style="left:91px;top:670px;font-size:11px;color:#fff">C</span>
<div class="a" style="left:111px;top:669px;width:12px;height:12px;border-radius:50%;background:radial-gradient(circle,#fff 0,#ddd 4px,#aaa 6px)"></div>
<span class="t" style="left:130px;top:670px;font-size:11px;color:#fff">S</span>
<div class="chk" style="left:21px;top:696px;color:#243a8a;font-size:11px;line-height:11px;text-align:center;background:linear-gradient(135deg,#ddd,#fff)"><svg class="a" style="left:1px;top:1px" width="11" height="11"><path d="M2.5 5.5l2.2 2.8L8.8 2.2" fill="none" stroke="#2a3a8c" stroke-width="1.7"/></svg></div>
<span class="t" style="left:40px;top:698px;font-size:11px;color:#fff">Suivi</span>
<div class="a" style="left:108px;top:695px;width:47px;height:17px;background:#3c3c3c"></div>
<span class="t" style="left:111px;top:698px;font-size:11px;color:#1a1a1a">PEC</span>
<div class="a" style="left:141px;top:697px;width:13px;height:13px;background:#f4f4f4"></div>
<div class="a" style="left:21px;top:718px;width:42px;height:24px;border:1px solid #9a9a9a;color:#fff;font-size:11px;text-align:center;line-height:22px;text-decoration:underline">Func</div>
<div class="a" style="left:65px;top:718px;width:43px;height:24px;border:1px solid #9a9a9a;color:#fff;font-size:11px;text-align:center;line-height:22px;text-decoration:underline">Park</div>
<div class="a" style="left:110px;top:718px;width:45px;height:24px;border:1px solid #9a9a9a;color:#fff;font-size:11px;text-align:center;line-height:22px;text-decoration:underline">Setup</div>
<div class="a" style="left:21px;top:750px;width:132px;height:18px;border:1px solid #777;border-radius:3px;background:linear-gradient(#fafafa,#e8e8e8);font-size:11px;text-align:center;line-height:16px">Déconnecter</div>
<!-- INTERRUPTEURS -->
<div class="tw" style="left:13px;top:795px;width:262px;height:258px;border-color:#5e6872"></div>
<span class="wt" style="left:20px;top:802px;font-size:12px">Contrôle des interrupteurs</span>
<div class="cbtn" style="left:252px;top:800px;width:16px;height:16px"><svg class="a" style="left:3px;top:3px" width="9" height="9"><path d="M1.5 1.5l6 6M7.5 1.5l-6 6" stroke="#4a525a" stroke-width="3.2" stroke-linecap="round"/><path d="M1.5 1.5l6 6M7.5 1.5l-6 6" stroke="#fff" stroke-width="1.3" stroke-linecap="round"/></svg></div>
<div class="a" style="left:18px;top:819px;width:251px;height:229px;background:#f0f0f0;border:1px solid #404850"></div>
<div class="a" style="left:25px;top:831px;width:200px;height:15px;border:1px solid #fff;box-shadow:inset 1px 1px 0 #a0a0a0"></div><span class="t" style="left:29px;top:834px;font-size:11px">Mirror</span><div class="a" style="left:236px;top:829px;width:25px;height:24px;border:1px solid #6a6a6a;border-radius:3px;background:linear-gradient(#f4f4f4,#d8d8d8)"><div class="a" style="left:5px;top:4px;width:14px;height:14px;background:#00e000"></div></div><div class="a" style="left:25px;top:856px;width:200px;height:15px;border:1px solid #fff;box-shadow:inset 1px 1px 0 #a0a0a0"></div><span class="t" style="left:29px;top:859px;font-size:11px">LEDs</span><div class="a" style="left:236px;top:854px;width:25px;height:24px;border:1px solid #6a6a6a;border-radius:3px;background:linear-gradient(#f4f4f4,#d8d8d8)"><div class="a" style="left:5px;top:4px;width:14px;height:14px;background:#00e000"></div></div><div class="a" style="left:25px;top:881px;width:200px;height:15px;border:1px solid #fff;box-shadow:inset 1px 1px 0 #a0a0a0"></div><span class="t" style="left:29px;top:884px;font-size:11px">ThAr</span><div class="a" style="left:236px;top:879px;width:25px;height:24px;border:1px solid #6a6a6a;border-radius:3px;background:linear-gradient(#f4f4f4,#d8d8d8)"><div class="a" style="left:5px;top:4px;width:14px;height:14px;background:#00e000"></div></div><div class="a" style="left:25px;top:906px;width:200px;height:15px;border:1px solid #fff;box-shadow:inset 1px 1px 0 #a0a0a0"></div><span class="t" style="left:29px;top:909px;font-size:11px">Tungsten</span><div class="a" style="left:236px;top:904px;width:25px;height:24px;border:1px solid #6a6a6a;border-radius:3px;background:linear-gradient(#f4f4f4,#d8d8d8)"><div class="a" style="left:5px;top:4px;width:14px;height:14px;background:#00e000"></div></div><div class="btn" style="left:59px;top:927px;width:159px;height:23px;line-height:21px">Rafraichir</div><div class="a" style="left:20px;top:957px;width:248px;height:87px;background:#fff;border:1px solid #a8a8a8"></div><span class="t" style="left:23px;top:960px;font-size:11px;line-height:13px">07/08/2015 02:32:42 : Interface eShel Calib : A
07/08/2015 02:32:42 : Chr(13)+Chr(1)+S1n
07/08/2015 02:32:44 : Interface eShel Calib : A
07/08/2015 02:32:44 : Chr(13)+Chr(1)+C1~
07/08/2015 02:47:41 : Interface eShel Calib : A</span><div class="a" style="left:249px;top:958px;width:18px;height:69px;background:#f0f0f0"></div><div class="a" style="left:254px;top:964px;border-left:4px solid transparent;border-right:4px solid transparent;border-bottom:4px solid #333"></div><div class="a" style="left:250px;top:978px;width:15px;height:15px;border:1px solid #a8a8a8;border-radius:2px;background:linear-gradient(90deg,#f4f4f4,#dadada)"></div><div class="a" style="left:254px;top:1018px;border-left:4px solid transparent;border-right:4px solid transparent;border-top:4px solid #333"></div><div class="a" style="left:21px;top:1027px;width:246px;height:16px;background:#f0f0f0"></div><div class="a" style="left:28px;top:1031px;border-top:4px solid transparent;border-bottom:4px solid transparent;border-right:4px solid #333"></div><div class="a" style="left:40px;top:1028px;width:96px;height:14px;border:1px solid #a8a8a8;border-radius:2px;background:linear-gradient(#f4f4f4,#dadada)"></div><div class="a" style="left:85px;top:1032px;width:6px;height:6px;border-left:1px solid #777;border-right:1px solid #777"></div><div class="a" style="left:238px;top:1031px;border-top:4px solid transparent;border-bottom:4px solid transparent;border-left:4px solid #333"></div>

<!--WINDOWS-->
</body></html>
